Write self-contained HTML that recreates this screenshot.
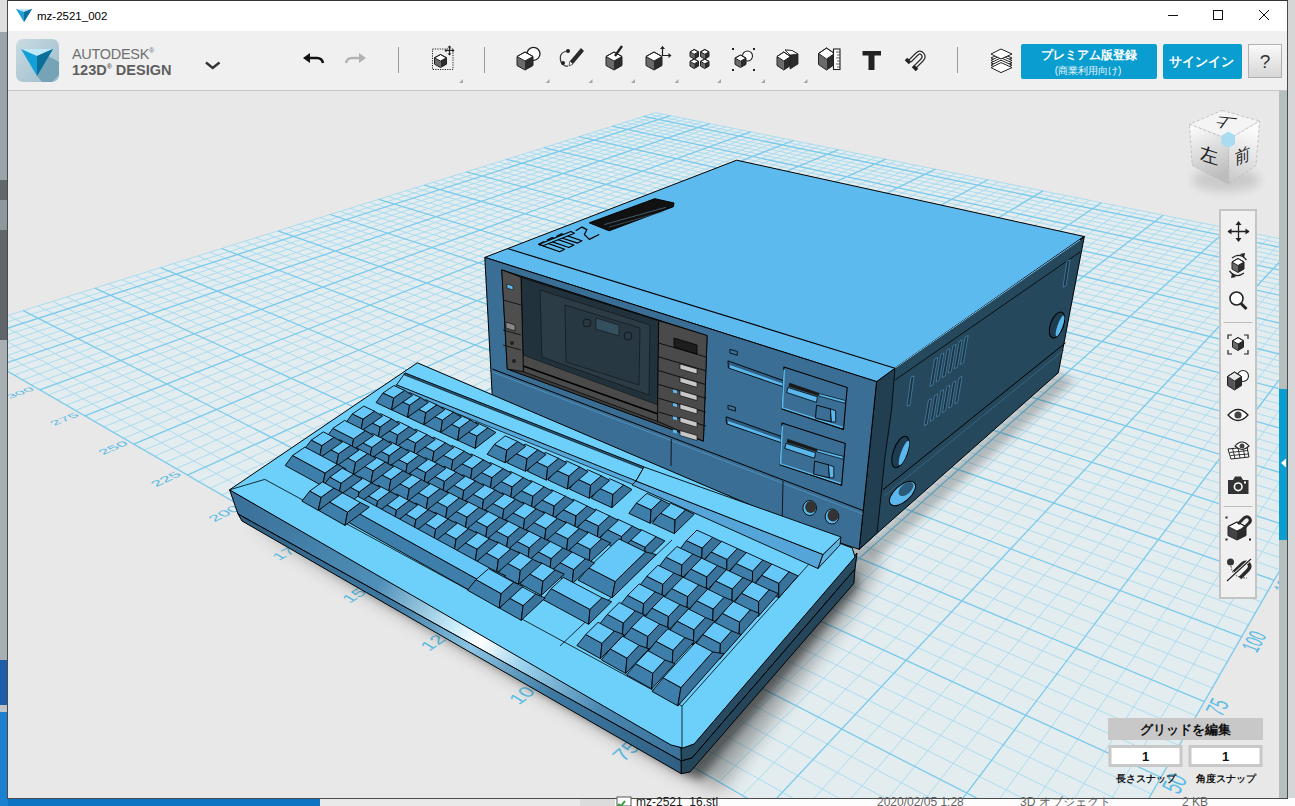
<!DOCTYPE html>
<html><head><meta charset="utf-8">
<style>
*{margin:0;padding:0;box-sizing:border-box}
html,body{width:1295px;height:806px;overflow:hidden;background:#0d74c4;font-family:"Liberation Sans",sans-serif}
.abs{position:absolute}
#lstrip{left:0;top:0;width:8px;height:806px;background:linear-gradient(#dedede 0 32px,#9ba4a9 32px 180px,#62676b 180px 200px,#8e979c 200px 230px,#5f6569 230px 340px,#a7afb3 340px 660px,#1c5fa8 660px 705px,#c0c4c8 705px 712px,#1a80cf 712px)}
#rstrip{left:1287px;top:0;width:8px;height:806px;background:#d4d6d8}
#bstrip{left:320px;top:798px;width:975px;height:8px;background:linear-gradient(90deg,#e9e9e9 0 260px,#dcdcdc 260px 295px,#fdfdfd 295px)}
#win{left:7px;top:0px;width:1281px;height:799px;background:#f0f0f0;border:1px solid #4a4a4a;border-top-color:#333;overflow:hidden}
#title{left:0;top:0;width:1279px;height:30px;background:#fff}
#toolbar{left:0;top:30px;width:1279px;height:60px;background:#f0f0f0;border-bottom:1px solid #c6c6c6}
#vp{left:0;top:90px;width:1271px;height:707px;background:#e8e8e8}
#sb{left:1271px;top:90px;width:8px;height:707px;background:#b5bfbe}
#sbblue{left:1271px;top:388px;width:8px;height:151px;background:#0a9dd0}
</style></head><body>
<div id="lstrip" class="abs"></div>
<div id="rstrip" class="abs"></div>
<div id="bstrip" class="abs"></div>
<div id="win" class="abs">
  <div id="title" class="abs"></div>
  <div id="toolbar" class="abs"></div>
  <div id="vp" class="abs"></div>
  <div id="sb" class="abs"></div>
  <div id="sbblue" class="abs"></div>
</div>
<svg class="abs" style="left:0;top:0" width="1295" height="806" viewBox="0 0 1295 806" font-family="'Liberation Sans', sans-serif">
<defs><clipPath id="vpclip"><rect x="8" y="91" width="1271" height="707"/></clipPath></defs>
<g clip-path="url(#vpclip)">
<polygon points="1048.9,972.4 1450.4,273.2 655.5,112.7 -55.0,335.1" fill="#e3ecef"/>
<path d="M1062.0 949.6L-38.8 330.0M1016.7 953.8L1434.3 270.0M1074.7 927.6L-22.9 325.1M985.5 935.8L1418.4 266.7M1086.9 906.3L-7.2 320.2M955.3 918.4L1402.6 263.6M1098.6 885.9L8.1 315.4M925.9 901.4L1387.1 260.4M1120.8 847.2L38.0 306.0M869.7 868.9L1356.6 254.3M1131.4 828.8L52.6 301.4M842.8 853.4L1341.7 251.3M1141.6 811.0L66.9 296.9M816.6 838.3L1326.9 248.3M1151.4 793.9L81.0 292.5M791.2 823.6L1312.3 245.3M1170.2 761.2L108.5 283.9M742.3 795.4L1283.7 239.5M1179.2 745.6L121.9 279.7M718.9 781.9L1269.7 236.7M1187.8 730.5L135.0 275.6M696.1 768.7L1255.8 233.9M1196.2 715.9L148.0 271.6M673.8 755.9L1242.1 231.1M1212.3 688.0L173.3 263.6M631.0 731.1L1215.1 225.7M1219.9 674.6L185.7 259.8M610.4 719.2L1201.9 223.0M1227.4 661.6L197.8 256.0M590.3 707.6L1188.8 220.4M1234.6 649.0L209.8 252.2M570.7 696.3L1175.9 217.8M1248.5 624.8L233.2 244.9M532.8 674.5L1150.5 212.6M1255.2 613.3L244.6 241.3M514.6 663.9L1138.0 210.1M1261.6 602.0L255.8 237.8M496.7 653.6L1125.7 207.6M1267.9 591.0L266.9 234.3M479.3 643.6L1113.4 205.2M1280.1 569.9L288.6 227.5M445.6 624.1L1089.5 200.3M1285.9 559.7L299.2 224.2M429.3 614.7L1077.7 197.9M1291.6 549.8L309.7 220.9M413.4 605.5L1066.0 195.6M1297.1 540.2L320.0 217.7M397.8 596.5L1054.5 193.2M1307.8 521.6L340.1 211.4M367.6 579.1L1031.8 188.7M1312.9 512.6L350.0 208.3M353.0 570.6L1020.6 186.4M1318.0 503.9L359.7 205.3M338.7 562.4L1009.5 184.2M1322.9 495.3L369.3 202.3M324.6 554.3L998.6 182.0M1332.4 478.8L388.1 196.4M297.4 538.6L977.1 177.6M1336.9 470.9L397.3 193.5M284.2 531.0L966.5 175.5M1341.4 463.1L406.4 190.7M271.3 523.5L956.1 173.4M1345.8 455.4L415.3 187.9M258.6 516.2L945.7 171.3M1354.3 440.7L432.9 182.4M234.0 501.9L925.3 167.2M1358.4 433.6L441.5 179.7M222.0 495.0L915.2 165.1M1362.4 426.6L450.0 177.0M210.3 488.2L905.3 163.1M1366.3 419.7L458.3 174.4M198.7 481.6L895.5 161.1M1373.9 406.5L474.8 169.2M176.3 468.6L876.1 157.2M1377.6 400.0L482.8 166.7M165.4 462.4L866.5 155.3M1381.2 393.7L490.8 164.2M154.7 456.2L857.1 153.4M1384.8 387.6L498.7 161.8M144.2 450.1L847.7 151.5M1391.6 375.6L514.1 156.9M123.7 438.3L829.3 147.8M1395.0 369.8L521.6 154.6M113.7 432.5L820.2 145.9M1398.3 364.1L529.1 152.2M103.9 426.8L811.2 144.1M1401.5 358.5L536.5 149.9M94.3 421.3L802.3 142.3M1407.7 347.6L551.0 145.4M75.5 410.4L784.7 138.8M1410.8 342.3L558.1 143.2M66.3 405.1L776.1 137.0M1413.7 337.1L565.2 141.0M57.3 399.9L767.5 135.3M1416.7 332.0L572.1 138.8M48.4 394.8L759.0 133.6M1422.4 322.1L585.8 134.5M31.1 384.8L742.3 130.2M1425.1 317.2L592.5 132.4M22.7 379.9L734.0 128.5M1427.9 312.5L599.1 130.3M14.3 375.1L725.8 126.9M1430.6 307.8L605.7 128.3M6.2 370.4L717.7 125.2M1435.8 298.7L618.5 124.2M-9.8 361.2L701.7 122.0M1438.3 294.3L624.9 122.3M-17.6 356.7L693.9 120.4M1440.8 289.9L631.1 120.3M-25.3 352.2L686.1 118.8M1443.3 285.7L637.3 118.4M-32.9 347.8L678.3 117.3M1448.1 277.3L649.5 114.5M-47.7 339.3L663.0 114.2M1450.4 273.2L655.5 112.7M-55.0 335.1L655.5 112.7" stroke="#a6daee" stroke-width="0.9" fill="none"/>
<path d="M1048.9 972.4L-55.0 335.1M1048.9 972.4L1450.4 273.2M1109.9 866.2L23.2 310.6M897.4 884.9L1371.8 257.3M1161.0 777.3L94.9 288.2M766.4 809.3L1297.9 242.4M1204.4 701.7L160.7 267.6M652.1 743.4L1228.5 228.4M1241.7 636.8L221.6 248.5M551.5 685.3L1163.1 215.2M1274.1 580.3L277.9 230.9M462.3 633.7L1101.4 202.7M1302.5 530.8L330.1 214.5M382.5 587.7L1043.0 190.9M1327.7 487.0L378.8 199.3M310.9 546.3L987.8 179.8M1350.1 448.0L424.2 185.1M246.2 509.0L935.4 169.2M1370.1 413.0L466.6 171.8M187.4 475.1L885.7 159.2M1388.2 381.5L506.4 159.3M133.8 444.1L838.5 149.6M1404.6 353.0L543.8 147.6M84.8 415.8L793.5 140.5M1419.5 327.0L579.0 136.6M39.7 389.8L750.6 131.9M1433.2 303.2L612.1 126.2M-1.9 365.8L709.7 123.6M1445.7 281.4L643.5 116.4M-40.4 343.5L670.6 115.7" stroke="#7acaeb" stroke-width="1.3" fill="none"/>
<g font-family="'Liberation Sans', sans-serif" fill="#5bbde6"><text transform="matrix(3.1580,-4.0798,5.5884,3.3034,869.43,894.95)" font-size="4.4" text-anchor="middle" dominant-baseline="central">25</text><text transform="matrix(2.1879,-3.9244,6.2154,3.1776,1124.12,873.46)" font-size="4.4" text-anchor="middle" dominant-baseline="central">25</text><text transform="matrix(3.3828,-3.5395,4.8488,2.8662,739.30,818.02)" font-size="4.4" text-anchor="middle" dominant-baseline="central">50</text><text transform="matrix(1.8441,-3.3077,5.8393,2.6786,1174.33,783.39)" font-size="4.4" text-anchor="middle" dominant-baseline="central">50</text><text transform="matrix(3.5258,-3.0997,4.2469,2.5104,625.85,750.96)" font-size="4.4" text-anchor="middle" dominant-baseline="central">75</text><text transform="matrix(1.5754,-2.8257,5.5015,2.2887,1216.95,706.95)" font-size="4.4" text-anchor="middle" dominant-baseline="central">75</text><text transform="matrix(3.6109,-2.7371,3.7505,2.2169,526.08,691.99)" font-size="4.4" text-anchor="middle" dominant-baseline="central">100</text><text transform="matrix(1.3614,-2.4419,5.1975,1.9781,1253.56,641.28)" font-size="4.4" text-anchor="middle" dominant-baseline="central">100</text><text transform="matrix(3.6543,-2.4345,3.3363,1.9721,437.64,639.71)" font-size="4.4" text-anchor="middle" dominant-baseline="central">125</text><text transform="matrix(1.1883,-2.1313,4.9234,1.7267,1285.36,584.25)" font-size="4.4" text-anchor="middle" dominant-baseline="central">125</text><text transform="matrix(3.6678,-2.1795,2.9871,1.7657,358.72,593.06)" font-size="4.4" text-anchor="middle" dominant-baseline="central">150</text><text transform="matrix(1.0461,-1.8764,4.6752,1.5204,1313.23,534.26)" font-size="4.4" text-anchor="middle" dominant-baseline="central">150</text><text transform="matrix(3.6596,-1.9624,2.6899,1.5900,287.86,551.17)" font-size="4.4" text-anchor="middle" dominant-baseline="central">175</text><text transform="matrix(0.9281,-1.6646,4.4498,1.3490,1337.86,490.07)" font-size="4.4" text-anchor="middle" dominant-baseline="central">175</text><text transform="matrix(3.6356,-1.7763,2.4351,1.4394,223.87,513.35)" font-size="4.4" text-anchor="middle" dominant-baseline="central">200</text><text transform="matrix(0.8289,-1.4868,4.2443,1.2050,1359.79,450.74)" font-size="4.4" text-anchor="middle" dominant-baseline="central">200</text><text transform="matrix(3.6003,-1.6154,2.2148,1.3092,165.82,479.03)" font-size="4.4" text-anchor="middle" dominant-baseline="central">225</text><text transform="matrix(0.7449,-1.3360,4.0564,1.0830,1379.44,415.51)" font-size="4.4" text-anchor="middle" dominant-baseline="central">225</text><text transform="matrix(3.5568,-1.4754,2.0230,1.1958,112.90,447.75)" font-size="4.4" text-anchor="middle" dominant-baseline="central">250</text><text transform="matrix(0.6730,-1.2070,3.8840,0.9786,1397.14,383.76)" font-size="4.4" text-anchor="middle" dominant-baseline="central">250</text><text transform="matrix(3.5076,-1.3528,1.8552,1.0966,64.47,419.13)" font-size="4.4" text-anchor="middle" dominant-baseline="central">275</text><text transform="matrix(0.6110,-1.0959,3.7253,0.8886,1413.17,355.01)" font-size="4.4" text-anchor="middle" dominant-baseline="central">275</text><text transform="matrix(3.4545,-1.2449,1.7074,1.0093,19.97,392.82)" font-size="4.4" text-anchor="middle" dominant-baseline="central">300</text><text transform="matrix(0.5572,-0.9994,3.5787,0.8105,1427.75,328.85)" font-size="4.4" text-anchor="middle" dominant-baseline="central">300</text><text transform="matrix(3.3988,-1.1494,1.5766,0.9319,-21.04,368.58)" font-size="4.4" text-anchor="middle" dominant-baseline="central">325</text><text transform="matrix(0.5102,-0.9151,3.4431,0.7422,1441.08,304.94)" font-size="4.4" text-anchor="middle" dominant-baseline="central">325</text><text transform="matrix(3.3416,-1.0645,1.4602,0.8632,-58.98,346.16)" font-size="4.4" text-anchor="middle" dominant-baseline="central">350</text><text transform="matrix(0.4689,-0.8411,3.3172,0.6823,1453.31,283.01)" font-size="4.4" text-anchor="middle" dominant-baseline="central">350</text></g>
<defs><filter id="blur12" x="-50%" y="-50%" width="200%" height="200%"><feGaussianBlur stdDeviation="9"/></filter><filter id="blur5" x="-50%" y="-50%" width="200%" height="200%"><feGaussianBlur stdDeviation="4"/></filter></defs>
<polygon points="242.0,521.0 681.0,774.0 720.0,790.0 860.0,600.0 880.0,560.0 850.0,540.0 650.0,700.0" fill="#000" opacity="0.30" filter="url(#blur12)"/>
<polygon points="242.0,519.0 681.0,772.0 700.0,780.0 858.0,588.0 856.0,570.0 681.0,755.0" fill="#000" opacity="0.45" filter="url(#blur5)"/>
<polygon points="860.0,549.0 1058.0,373.0 1075.0,380.0 875.0,560.0" fill="#000" opacity="0.22" filter="url(#blur5)"/>
<polygon points="876.6,381.6 895.0,368.2 1084.3,236.5 1058.3,372.8 877.1,533.2 859.2,549.3" fill="#26485d" stroke="#000" stroke-width="1.0" stroke-linejoin="round"/>
<polygon points="876.6,381.6 895.0,368.2 891.5,410.0 884.6,460.0 877.1,533.2 859.2,549.3" fill="#223f52" stroke="#000" stroke-width="0.8" stroke-linejoin="round"/>
<polygon points="484.8,257.4 736.7,160.2 1084.3,236.5 895.0,368.2 876.6,381.6" fill="#5dbaee" stroke="#000" stroke-width="1.0" stroke-linejoin="round"/>
<polyline points="508.2,248.7 895.0,368.2 1084.3,236.5" fill="none" stroke="#000" stroke-width="1.2" stroke-linejoin="round"/>
<polyline points="895.0,368.2 1080.0,240.0" fill="none" stroke="#7cc8f0" stroke-width="1" stroke-linejoin="round"/>
<polygon points="484.8,257.4 876.6,381.6 859.2,549.3 494.0,429.0" fill="#3a6e94" stroke="#000" stroke-width="1.0" stroke-linejoin="round"/>
<polyline points="882.8,489.8 1065.5,342.8" fill="none" stroke="#000" stroke-width="1" stroke-linejoin="round"/>
<polyline points="884.0,496.0 1064.0,350.0" fill="none" stroke="#3d6a85" stroke-width="0.8" stroke-linejoin="round"/>
<polyline points="895.0,380.0 1080.0,252.0" fill="none" stroke="#000" stroke-width="0.8" stroke-linejoin="round"/>
<polygon points="930.0,386.3 934.7,359.0 937.7,357.5 933.0,384.8" fill="#1a3242" stroke="#4f8db3" stroke-width="0.7" stroke-linejoin="round"/>
<polygon points="936.1,381.9 940.8,354.6 943.8,353.1 939.1,380.4" fill="#1a3242" stroke="#4f8db3" stroke-width="0.7" stroke-linejoin="round"/>
<polygon points="942.2,377.5 946.9,350.2 949.9,348.7 945.2,376.0" fill="#1a3242" stroke="#4f8db3" stroke-width="0.7" stroke-linejoin="round"/>
<polygon points="948.3,373.1 953.0,345.8 956.0,344.3 951.3,371.6" fill="#1a3242" stroke="#4f8db3" stroke-width="0.7" stroke-linejoin="round"/>
<polygon points="954.4,368.7 959.1,341.4 962.1,339.9 957.4,367.2" fill="#1a3242" stroke="#4f8db3" stroke-width="0.7" stroke-linejoin="round"/>
<polygon points="960.5,364.3 965.2,337.0 968.2,335.5 963.5,362.8" fill="#1a3242" stroke="#4f8db3" stroke-width="0.7" stroke-linejoin="round"/>
<polygon points="924.2,425.6 928.5,400.0 931.5,398.5 927.2,424.1" fill="#1a3242" stroke="#4f8db3" stroke-width="0.7" stroke-linejoin="round"/>
<polygon points="930.3,421.2 934.6,395.6 937.6,394.1 933.3,419.7" fill="#1a3242" stroke="#4f8db3" stroke-width="0.7" stroke-linejoin="round"/>
<polygon points="936.4,416.8 940.7,391.2 943.7,389.7 939.4,415.3" fill="#1a3242" stroke="#4f8db3" stroke-width="0.7" stroke-linejoin="round"/>
<polygon points="942.5,412.4 946.8,386.8 949.8,385.3 945.5,410.9" fill="#1a3242" stroke="#4f8db3" stroke-width="0.7" stroke-linejoin="round"/>
<polygon points="948.6,408.0 952.9,382.4 955.9,380.9 951.6,406.5" fill="#1a3242" stroke="#4f8db3" stroke-width="0.7" stroke-linejoin="round"/>
<polygon points="954.7,403.6 959.0,378.0 962.0,376.5 957.7,402.1" fill="#1a3242" stroke="#4f8db3" stroke-width="0.7" stroke-linejoin="round"/>
<polygon points="907.0,406.0 911.0,377.0 914.0,376.0 910.0,405.0" fill="#1a3242" stroke="#4f8db3" stroke-width="0.7" stroke-linejoin="round"/>
<polygon points="1063.0,287.0 1067.0,261.0 1070.0,260.0 1066.0,286.0" fill="#1a3242" stroke="#4f8db3" stroke-width="0.7" stroke-linejoin="round"/>
<ellipse cx="900.5" cy="452" rx="7" ry="16.5" transform="rotate(20 900.5 452)" fill="#1f3d50" stroke="#000" stroke-width="1"/>
<ellipse cx="904" cy="453" rx="3" ry="13" transform="rotate(20 904 453)" fill="#5ab8ec"/>
<ellipse cx="1057" cy="325" rx="6.5" ry="13.5" transform="rotate(20 1057 325)" fill="#1f3d50" stroke="#000" stroke-width="1"/>
<ellipse cx="1060" cy="326" rx="2.5" ry="11" transform="rotate(20 1060 326)" fill="#5ab8ec"/>
<ellipse cx="902.5" cy="493.5" rx="8" ry="16" transform="rotate(48 902.5 493.5)" fill="#5ab8ec" stroke="#000" stroke-width="1"/>
<ellipse cx="906" cy="489" rx="5" ry="9" transform="rotate(48 906 489)" fill="#2a5a78"/>
<polygon points="501.8,269.9 707.1,335.6 703.4,441.1 507.3,369.1" fill="#3c3c3c" stroke="#000" stroke-width="1.0" stroke-linejoin="round"/>
<polygon points="521.0,277.3 658.7,320.7 657.5,421.3 523.4,371.6" fill="#22323c" stroke="#000" stroke-width="0.8" stroke-linejoin="round"/>
<polygon points="540.0,290.0 650.0,325.0 649.0,395.0 542.0,357.0" fill="#2b3c46" stroke="#111" stroke-width="0.6" stroke-linejoin="round"/>
<polygon points="565.0,305.0 640.0,328.0 639.0,385.0 566.0,362.0" fill="#273843" stroke="#111" stroke-width="0.6" stroke-linejoin="round"/>
<circle cx="587" cy="323" r="4" fill="none" stroke="#111" stroke-width="0.8"/><circle cx="628" cy="336" r="4" fill="none" stroke="#111" stroke-width="0.8"/>
<polygon points="596.0,318.0 619.0,325.0 619.0,336.0 596.0,329.0" fill="#34505e" stroke="#111" stroke-width="0.6" stroke-linejoin="round"/>
<polygon points="523.0,355.0 657.8,405.0 657.5,421.3 523.4,371.6" fill="#4a4a4a" stroke="#111" stroke-width="0.6" stroke-linejoin="round"/>
<polyline points="512.0,362.0 703.0,430.0" fill="none" stroke="#000" stroke-width="1.6" stroke-linejoin="round"/>
<polygon points="501.8,269.9 521.0,277.3 523.4,371.6 507.3,369.1" fill="#4e4e4e" stroke="#000" stroke-width="0.8" stroke-linejoin="round"/>
<polyline points="503.0,300.0 521.0,305.0" fill="none" stroke="#000" stroke-width="0.7" stroke-linejoin="round"/>
<polyline points="503.0,330.0 521.0,335.0" fill="none" stroke="#000" stroke-width="0.7" stroke-linejoin="round"/>
<polyline points="503.0,345.0 521.0,350.0" fill="none" stroke="#000" stroke-width="0.7" stroke-linejoin="round"/>
<polygon points="507.0,284.0 513.0,286.0 513.0,290.0 507.0,288.0" fill="#5ab8ec" stroke="#000" stroke-width="0.5" stroke-linejoin="round"/>
<circle cx="512" cy="343" r="2" fill="#222"/><circle cx="514" cy="361" r="2" fill="#222"/>
<polygon points="506.0,322.0 515.0,325.0 515.0,331.0 506.0,328.0" fill="#888" stroke="#000" stroke-width="0.6" stroke-linejoin="round"/>
<polygon points="658.7,320.7 707.1,335.6 703.4,441.1 657.5,421.3" fill="#4a4a4a" stroke="#000" stroke-width="0.8" stroke-linejoin="round"/>
<polyline points="658.5,343.0 706.0,357.0" fill="none" stroke="#000" stroke-width="0.8" stroke-linejoin="round"/>
<polyline points="658.5,356.8 706.0,370.8" fill="none" stroke="#000" stroke-width="0.8" stroke-linejoin="round"/>
<polyline points="658.5,370.6 706.0,384.6" fill="none" stroke="#000" stroke-width="0.8" stroke-linejoin="round"/>
<polyline points="658.5,384.4 706.0,398.4" fill="none" stroke="#000" stroke-width="0.8" stroke-linejoin="round"/>
<polyline points="658.5,398.2 706.0,412.2" fill="none" stroke="#000" stroke-width="0.8" stroke-linejoin="round"/>
<polyline points="658.5,412.0 706.0,426.0" fill="none" stroke="#000" stroke-width="0.8" stroke-linejoin="round"/>
<polygon points="674.0,338.0 697.0,345.0 697.0,354.0 674.0,347.0" fill="#1e1e1e" stroke="#000" stroke-width="0.8" stroke-linejoin="round"/>
<polygon points="680.0,364.0 697.0,369.0 697.0,374.0 680.0,369.0" fill="#c8c8c8" stroke="#000" stroke-width="0.6" stroke-linejoin="round"/>
<polygon points="680.0,377.3 697.0,382.3 697.0,387.3 680.0,382.3" fill="#c8c8c8" stroke="#000" stroke-width="0.6" stroke-linejoin="round"/>
<polygon points="680.0,390.6 697.0,395.6 697.0,400.6 680.0,395.6" fill="#c8c8c8" stroke="#000" stroke-width="0.6" stroke-linejoin="round"/>
<polygon points="680.0,403.9 697.0,408.9 697.0,413.9 680.0,408.9" fill="#c8c8c8" stroke="#000" stroke-width="0.6" stroke-linejoin="round"/>
<polygon points="680.0,417.2 697.0,422.2 697.0,427.2 680.0,422.2" fill="#c8c8c8" stroke="#000" stroke-width="0.6" stroke-linejoin="round"/>
<polygon points="680.0,430.5 697.0,435.5 697.0,440.5 680.0,435.5" fill="#c8c8c8" stroke="#000" stroke-width="0.6" stroke-linejoin="round"/>
<polygon points="673.0,389.6 677.0,390.6 677.0,393.6 673.0,392.6" fill="#5ab8ec"/>
<polygon points="673.0,402.9 677.0,403.9 677.0,406.9 673.0,405.9" fill="#5ab8ec"/>
<polygon points="673.0,416.2 677.0,417.2 677.0,420.2 673.0,419.2" fill="#5ab8ec"/>
<polygon points="673.0,429.5 677.0,430.5 677.0,433.5 673.0,432.5" fill="#5ab8ec"/>
<polyline points="492.4,369.0 863.4,510.6" fill="none" stroke="#000" stroke-width="1" stroke-linejoin="round"/>
<polyline points="492.4,372.0 863.0,514.0" fill="none" stroke="#5a9cc8" stroke-width="0.7" stroke-linejoin="round"/>
<polyline points="671.3,439.0 671.0,466.0" fill="none" stroke="#000" stroke-width="0.8" stroke-linejoin="round"/>
<polyline points="783.0,481.0 782.0,530.0" fill="none" stroke="#000" stroke-width="0.8" stroke-linejoin="round"/>
<polygon points="729.9,349.3 737.3,351.5 737.3,355.3 729.9,353.0" fill="#3a6e94" stroke="#000" stroke-width="0.8" stroke-linejoin="round"/>
<polygon points="728.0,360.9 789.5,382.8 789.1,388.8 728.4,367.9" fill="#2f5f86" stroke="#000" stroke-width="0.9" stroke-linejoin="round"/>
<polygon points="729.9,365.1 788.5,385.6 788.5,388.0 729.9,367.9" fill="#5ab8ec"/>
<polygon points="783.9,367.0 847.2,387.5 843.5,429.4 782.0,408.9" fill="#3a6e94" stroke="#000" stroke-width="1.1" stroke-linejoin="round"/>
<polyline points="784.3,369.8 782.4,408.0 842.5,427.5" fill="none" stroke="#5ab8ec" stroke-width="1.6" stroke-linejoin="round"/>
<polyline points="782.0,408.9 843.5,429.4" fill="none" stroke="#000" stroke-width="0.8" stroke-linejoin="round"/>
<polygon points="789.5,382.8 819.3,393.1 818.3,395.9 788.5,386.6" fill="#1a1a1a"/>
<polygon points="788.0,387.5 817.4,396.8 816.5,402.4 786.7,392.5" fill="#5ab8ec" stroke="#000" stroke-width="0.8" stroke-linejoin="round"/>
<polygon points="819.3,393.6 845.3,400.5 845.0,403.3 818.5,395.9" fill="#5ab8ec" stroke="#000" stroke-width="0.7" stroke-linejoin="round"/>
<polygon points="816.5,405.2 830.4,408.9 831.4,421.9 815.5,418.2" fill="#3a6e94" stroke="#000" stroke-width="0.9" stroke-linejoin="round"/>
<polygon points="830.4,408.9 835.7,410.8 835.7,421.9 831.4,421.9" fill="#5ab8ec" stroke="#000" stroke-width="0.8" stroke-linejoin="round"/>
<polygon points="728.0,405.2 735.4,407.4 735.4,411.2 728.0,408.9" fill="#3a6e94" stroke="#000" stroke-width="0.8" stroke-linejoin="round"/>
<polygon points="726.1,416.8 787.6,438.7 787.2,444.7 726.5,423.8" fill="#2f5f86" stroke="#000" stroke-width="0.9" stroke-linejoin="round"/>
<polygon points="728.0,421.0 786.6,441.5 786.6,443.9 728.0,423.8" fill="#5ab8ec"/>
<polygon points="782.0,422.9 845.3,443.4 841.6,485.3 780.1,464.8" fill="#3a6e94" stroke="#000" stroke-width="1.1" stroke-linejoin="round"/>
<polyline points="782.4,425.7 780.5,463.9 840.6,483.4" fill="none" stroke="#5ab8ec" stroke-width="1.6" stroke-linejoin="round"/>
<polyline points="780.1,464.8 841.6,485.3" fill="none" stroke="#000" stroke-width="0.8" stroke-linejoin="round"/>
<polygon points="787.6,438.7 817.4,449.0 816.4,451.8 786.6,442.4" fill="#1a1a1a"/>
<polygon points="786.1,443.4 815.5,452.7 814.6,458.3 784.8,448.4" fill="#5ab8ec" stroke="#000" stroke-width="0.8" stroke-linejoin="round"/>
<polygon points="817.4,449.5 843.4,456.4 843.1,459.2 816.6,451.8" fill="#5ab8ec" stroke="#000" stroke-width="0.7" stroke-linejoin="round"/>
<polygon points="814.6,461.1 828.5,464.8 829.5,477.8 813.6,474.1" fill="#3a6e94" stroke="#000" stroke-width="0.9" stroke-linejoin="round"/>
<polygon points="828.5,464.8 833.8,466.7 833.8,477.8 829.5,477.8" fill="#5ab8ec" stroke="#000" stroke-width="0.8" stroke-linejoin="round"/>
<ellipse cx="809.7" cy="508" rx="6.8" ry="7.5" fill="#5ab8ec" stroke="#000" stroke-width="0.9"/>
<ellipse cx="810.7" cy="507" rx="5.5" ry="6" fill="#333"/>
<ellipse cx="832" cy="516.5" rx="6.8" ry="7.5" fill="#5ab8ec" stroke="#000" stroke-width="0.9"/>
<ellipse cx="833" cy="515.5" rx="5.5" ry="6" fill="#333"/>
<polygon points="538.7,244.4 559.7,251.8 564.6,249.3 543.6,241.9" fill="#5dbaee" stroke="#000" stroke-width="1.2" stroke-linejoin="round"/>
<polygon points="547.3,240.1 568.9,247.5 573.9,245.0 552.2,237.6" fill="#5dbaee" stroke="#000" stroke-width="1.2" stroke-linejoin="round"/>
<polygon points="556.6,236.3 577.6,243.1 581.9,240.7 561.5,233.9" fill="#5dbaee" stroke="#000" stroke-width="1.2" stroke-linejoin="round"/>
<polygon points="538.7,244.4 570.8,231.4 574.5,233.3 543.6,245.6" fill="#5dbaee" stroke="#000" stroke-width="1.1" stroke-linejoin="round"/>
<polyline points="575.7,230.8 581.9,227.1 586.9,229.6 584.4,234.5 589.3,239.4 599.2,234.5" fill="none" stroke="#000" stroke-width="1.2" stroke-linejoin="round"/>
<polygon points="589.3,222.8 654.8,198.7 674.0,203.0 673.4,206.7 609.1,230.8" fill="#111" stroke="#000" stroke-width="1" stroke-linejoin="round"/>
<polyline points="604.2,224.6 666.0,207.3" fill="none" stroke="#4a6e85" stroke-width="0.8" stroke-linejoin="round"/>
<polyline points="609.1,227.1 663.5,211.6" fill="none" stroke="#4a6e85" stroke-width="0.6" stroke-linejoin="round"/>
<defs><linearGradient id="refl" gradientUnits="userSpaceOnUse" x1="240" y1="518" x2="681" y2="773"><stop offset="0" stop-color="#3b729b"/><stop offset="0.3" stop-color="#4f8fb8"/><stop offset="0.47" stop-color="#c8ecfa"/><stop offset="0.53" stop-color="#ffffff"/><stop offset="0.62" stop-color="#9ed4ee"/><stop offset="0.8" stop-color="#4a88b2"/><stop offset="1" stop-color="#3a6f96"/></linearGradient><linearGradient id="refl2" gradientUnits="userSpaceOnUse" x1="240" y1="518" x2="681" y2="773"><stop offset="0" stop-color="#2f5f82"/><stop offset="0.35" stop-color="#3f7aa3"/><stop offset="0.52" stop-color="#8cc6e4"/><stop offset="0.7" stop-color="#3f7aa3"/><stop offset="1" stop-color="#2f5f82"/></linearGradient></defs>
<polygon points="229.6,489.8 681.0,748.0 683.0,752.0 681.3,761.0 238.0,514.0" fill="url(#refl)" stroke="#000" stroke-width="1.0" stroke-linejoin="round"/>
<polygon points="238.0,514.0 681.3,761.0 681.3,773.7 242.0,521.0" fill="url(#refl2)" stroke="#000" stroke-width="1.0" stroke-linejoin="round"/>
<polygon points="681.0,748.0 694.0,744.0 857.0,553.0 855.0,569.0 692.0,758.0 681.3,761.0" fill="#284b62" stroke="#000" stroke-width="1.0" stroke-linejoin="round"/>
<polygon points="681.3,761.0 692.0,758.0 855.0,569.0 853.8,583.4 690.0,772.0 681.3,773.7" fill="#25455a" stroke="#000" stroke-width="1.0" stroke-linejoin="round"/>
<polygon points="229.6,489.8 417.3,362.8 843.4,544.7 852.3,548.0 855.0,557.0 694.2,743.9 683.0,748.0 671.0,745.0" fill="#6cd0fb" stroke="#000" stroke-width="1.0" stroke-linejoin="round"/>
<polyline points="229.6,489.8 264.8,479.4" fill="none" stroke="#000" stroke-width="0.8" stroke-linejoin="round"/>
<polyline points="264.8,479.4 682.0,706.0 682.0,748.0" fill="none" stroke="#000" stroke-width="0.8" stroke-linejoin="round"/>
<polyline points="682.0,706.0 826.0,545.0" fill="none" stroke="#000" stroke-width="0.8" stroke-linejoin="round"/>
<polyline points="560.0,646.0 672.0,540.0" fill="none" stroke="#000" stroke-width="0.8" stroke-linejoin="round"/>
<polygon points="396.5,384.9 405.0,373.0 644.0,467.0 636.0,481.0" fill="#6cd0fb" stroke="#000" stroke-width="0.9" stroke-linejoin="round"/>
<polygon points="405.0,373.0 644.0,467.0 643.5,469.0 404.5,375.0" fill="#2a5574" stroke="#000" stroke-width="0.6" stroke-linejoin="round"/>
<polygon points="396.5,384.9 636.0,481.0 634.0,485.0 395.0,388.5" fill="#55a8dc" stroke="#000" stroke-width="0.7" stroke-linejoin="round"/>
<polygon points="636.0,481.0 823.0,554.5 818.0,568.5 632.0,485.0" fill="#55a5d8" stroke="#000" stroke-width="0.9" stroke-linejoin="round"/>
<polygon points="823.0,554.5 841.0,537.0 840.0,545.0 818.0,568.5" fill="#5fb3e3" stroke="#000" stroke-width="0.9" stroke-linejoin="round"/>
<polygon points="644.0,467.0 841.0,537.0 823.0,554.5 636.0,481.0" fill="#6cd0fb" stroke="#000" stroke-width="0.9" stroke-linejoin="round"/>
<polygon points="652.3,523.4 674.4,533.6 675.1,519.9 660.1,513.0" fill="#3e7eaa" stroke="#000" stroke-width="0.9" stroke-linejoin="round"/><polygon points="674.4,533.6 694.2,514.3 685.5,509.9 675.1,519.9" fill="#39739c" stroke="#000" stroke-width="0.9" stroke-linejoin="round"/><polygon points="660.1,513.0 675.1,519.9 685.5,509.9 670.5,503.1" fill="#66c8f8" stroke="#000" stroke-width="0.9" stroke-linejoin="round"/>
<polygon points="628.8,513.4 650.2,523.3 651.1,509.8 636.4,503.1" fill="#3e7eaa" stroke="#000" stroke-width="0.9" stroke-linejoin="round"/><polygon points="650.2,523.3 670.1,504.4 661.5,500.0 651.1,509.8" fill="#39739c" stroke="#000" stroke-width="0.9" stroke-linejoin="round"/><polygon points="636.4,503.1 651.1,509.8 661.5,500.0 646.9,493.4" fill="#66c8f8" stroke="#000" stroke-width="0.9" stroke-linejoin="round"/>
<polygon points="591.3,498.2 611.9,507.7 612.9,494.4 598.9,488.0" fill="#3e7eaa" stroke="#000" stroke-width="0.9" stroke-linejoin="round"/><polygon points="611.9,507.7 632.0,489.5 623.5,484.9 612.9,494.4" fill="#39739c" stroke="#000" stroke-width="0.9" stroke-linejoin="round"/><polygon points="598.9,488.0 612.9,494.4 623.5,484.9 609.5,478.6" fill="#66c8f8" stroke="#000" stroke-width="0.9" stroke-linejoin="round"/>
<polygon points="569.4,489.0 589.4,498.3 590.6,485.1 577.0,478.8" fill="#3e7eaa" stroke="#000" stroke-width="0.9" stroke-linejoin="round"/><polygon points="589.4,498.3 609.7,480.4 601.3,475.8 590.6,485.1" fill="#39739c" stroke="#000" stroke-width="0.9" stroke-linejoin="round"/><polygon points="577.0,478.8 590.6,485.1 601.3,475.8 587.6,469.7" fill="#66c8f8" stroke="#000" stroke-width="0.9" stroke-linejoin="round"/>
<polygon points="548.1,480.0 567.6,489.1 568.9,476.1 555.6,469.9" fill="#3e7eaa" stroke="#000" stroke-width="0.9" stroke-linejoin="round"/><polygon points="567.6,489.1 588.0,471.6 579.6,466.9 568.9,476.1" fill="#39739c" stroke="#000" stroke-width="0.9" stroke-linejoin="round"/><polygon points="555.6,469.9 568.9,476.1 579.6,466.9 566.3,460.9" fill="#66c8f8" stroke="#000" stroke-width="0.9" stroke-linejoin="round"/>
<polygon points="527.3,471.2 546.3,480.1 547.7,467.2 534.7,461.2" fill="#3e7eaa" stroke="#000" stroke-width="0.9" stroke-linejoin="round"/><polygon points="546.3,480.1 566.8,462.9 558.4,458.3 547.7,467.2" fill="#39739c" stroke="#000" stroke-width="0.9" stroke-linejoin="round"/><polygon points="534.7,461.2 547.7,467.2 558.4,458.3 545.4,452.4" fill="#66c8f8" stroke="#000" stroke-width="0.9" stroke-linejoin="round"/>
<polygon points="506.9,462.7 525.5,471.3 527.0,458.6 514.3,452.7" fill="#3e7eaa" stroke="#000" stroke-width="0.9" stroke-linejoin="round"/><polygon points="525.5,471.3 546.1,454.5 537.8,449.8 527.0,458.6" fill="#39739c" stroke="#000" stroke-width="0.9" stroke-linejoin="round"/><polygon points="514.3,452.7 527.0,458.6 537.8,449.8 525.1,444.1" fill="#66c8f8" stroke="#000" stroke-width="0.9" stroke-linejoin="round"/>
<polygon points="457.8,440.3 475.2,448.4 476.9,436.0 465.0,430.5" fill="#3e7eaa" stroke="#000" stroke-width="0.9" stroke-linejoin="round"/><polygon points="475.2,448.4 495.9,432.5 487.8,427.7 476.9,436.0" fill="#39739c" stroke="#000" stroke-width="0.9" stroke-linejoin="round"/><polygon points="465.0,430.5 476.9,436.0 487.8,427.7 475.9,422.3" fill="#66c8f8" stroke="#000" stroke-width="0.9" stroke-linejoin="round"/>
<polygon points="440.7,432.4 457.7,440.4 459.5,428.0 447.9,422.6" fill="#3e7eaa" stroke="#000" stroke-width="0.9" stroke-linejoin="round"/><polygon points="457.7,440.4 478.5,424.8 470.4,419.9 459.5,428.0" fill="#39739c" stroke="#000" stroke-width="0.9" stroke-linejoin="round"/><polygon points="447.9,422.6 459.5,428.0 470.4,419.9 458.8,414.6" fill="#66c8f8" stroke="#000" stroke-width="0.9" stroke-linejoin="round"/>
<polygon points="424.0,424.7 440.7,432.5 442.5,420.2 431.1,415.0" fill="#3e7eaa" stroke="#000" stroke-width="0.9" stroke-linejoin="round"/><polygon points="440.7,432.5 461.4,417.2 453.4,412.2 442.5,420.2" fill="#39739c" stroke="#000" stroke-width="0.9" stroke-linejoin="round"/><polygon points="431.1,415.0 442.5,420.2 453.4,412.2 442.0,407.1" fill="#66c8f8" stroke="#000" stroke-width="0.9" stroke-linejoin="round"/>
<polygon points="407.7,417.2 423.9,424.8 425.9,412.6 414.7,407.5" fill="#3e7eaa" stroke="#000" stroke-width="0.9" stroke-linejoin="round"/><polygon points="423.9,424.8 444.8,409.7 436.8,404.8 425.9,412.6" fill="#39739c" stroke="#000" stroke-width="0.9" stroke-linejoin="round"/><polygon points="414.7,407.5 425.9,412.6 436.8,404.8 425.6,399.7" fill="#66c8f8" stroke="#000" stroke-width="0.9" stroke-linejoin="round"/>
<polygon points="487.1,454.3 505.2,462.8 506.8,450.1 494.4,444.4" fill="#3e7eaa" stroke="#000" stroke-width="0.9" stroke-linejoin="round"/><polygon points="505.2,462.8 525.8,446.3 517.6,441.5 506.8,450.1" fill="#39739c" stroke="#000" stroke-width="0.9" stroke-linejoin="round"/><polygon points="494.4,444.4 506.8,450.1 517.6,441.5 505.2,435.9" fill="#66c8f8" stroke="#000" stroke-width="0.9" stroke-linejoin="round"/>
<polygon points="391.7,409.8 407.6,417.3 409.6,405.2 398.7,400.2" fill="#3e7eaa" stroke="#000" stroke-width="0.9" stroke-linejoin="round"/><polygon points="407.6,417.3 428.4,402.5 420.5,397.5 409.6,405.2" fill="#39739c" stroke="#000" stroke-width="0.9" stroke-linejoin="round"/><polygon points="398.7,400.2 409.6,405.2 420.5,397.5 409.6,392.6" fill="#66c8f8" stroke="#000" stroke-width="0.9" stroke-linejoin="round"/>
<polygon points="376.1,402.6 391.6,409.9 393.7,397.9 383.0,393.0" fill="#3e7eaa" stroke="#000" stroke-width="0.9" stroke-linejoin="round"/><polygon points="391.6,409.9 412.5,395.4 404.6,390.4 393.7,397.9" fill="#39739c" stroke="#000" stroke-width="0.9" stroke-linejoin="round"/><polygon points="383.0,393.0 393.7,397.9 404.6,390.4 393.9,385.5" fill="#66c8f8" stroke="#000" stroke-width="0.9" stroke-linejoin="round"/>
<polygon points="753.6,586.0 778.8,597.8 778.9,583.3 761.7,575.3" fill="#3e7eaa" stroke="#000" stroke-width="0.9" stroke-linejoin="round"/><polygon points="778.8,597.8 798.1,575.9 789.0,571.8 778.9,583.3" fill="#39739c" stroke="#000" stroke-width="0.9" stroke-linejoin="round"/><polygon points="761.7,575.3 778.9,583.3 789.0,571.8 771.9,564.0" fill="#66c8f8" stroke="#000" stroke-width="0.9" stroke-linejoin="round"/>
<polygon points="727.9,574.0 752.3,585.5 752.6,571.2 735.9,563.4" fill="#3e7eaa" stroke="#000" stroke-width="0.9" stroke-linejoin="round"/><polygon points="752.3,585.5 771.8,564.1 762.8,560.0 752.6,571.2" fill="#39739c" stroke="#000" stroke-width="0.9" stroke-linejoin="round"/><polygon points="735.9,563.4 752.6,571.2 762.8,560.0 746.2,552.4" fill="#66c8f8" stroke="#000" stroke-width="0.9" stroke-linejoin="round"/>
<polygon points="702.8,562.4 726.6,573.6 727.0,559.4 710.8,551.8" fill="#3e7eaa" stroke="#000" stroke-width="0.9" stroke-linejoin="round"/><polygon points="726.6,573.6 746.3,552.7 737.4,548.5 727.0,559.4" fill="#39739c" stroke="#000" stroke-width="0.9" stroke-linejoin="round"/><polygon points="710.8,551.8 727.0,559.4 737.4,548.5 721.2,541.1" fill="#66c8f8" stroke="#000" stroke-width="0.9" stroke-linejoin="round"/>
<polygon points="678.5,551.1 701.6,562.0 702.2,548.0 686.4,540.6" fill="#3e7eaa" stroke="#000" stroke-width="0.9" stroke-linejoin="round"/><polygon points="701.6,562.0 721.4,541.6 712.6,537.3 702.2,548.0" fill="#39739c" stroke="#000" stroke-width="0.9" stroke-linejoin="round"/><polygon points="686.4,540.6 702.2,548.0 712.6,537.3 696.9,530.1" fill="#66c8f8" stroke="#000" stroke-width="0.9" stroke-linejoin="round"/>
<polygon points="733.1,604.0 758.4,616.3 758.7,601.5 741.4,593.2" fill="#3e7eaa" stroke="#000" stroke-width="0.9" stroke-linejoin="round"/><polygon points="758.4,616.3 778.4,593.6 769.1,589.7 758.7,601.5" fill="#39739c" stroke="#000" stroke-width="0.9" stroke-linejoin="round"/><polygon points="741.4,593.2 758.7,601.5 769.1,589.7 752.0,581.6" fill="#66c8f8" stroke="#000" stroke-width="0.9" stroke-linejoin="round"/>
<polygon points="707.4,591.6 731.9,603.5 732.3,589.0 715.6,580.9" fill="#3e7eaa" stroke="#000" stroke-width="0.9" stroke-linejoin="round"/><polygon points="731.9,603.5 752.1,581.5 742.9,577.5 732.3,589.0" fill="#39739c" stroke="#000" stroke-width="0.9" stroke-linejoin="round"/><polygon points="715.6,580.9 732.3,589.0 742.9,577.5 726.2,569.6" fill="#66c8f8" stroke="#000" stroke-width="0.9" stroke-linejoin="round"/>
<polygon points="682.3,579.6 706.2,591.2 706.8,576.8 690.5,568.9" fill="#3e7eaa" stroke="#000" stroke-width="0.9" stroke-linejoin="round"/><polygon points="706.2,591.2 726.5,569.6 717.4,565.6 706.8,576.8" fill="#39739c" stroke="#000" stroke-width="0.9" stroke-linejoin="round"/><polygon points="690.5,568.9 706.8,576.8 717.4,565.6 701.2,557.9" fill="#66c8f8" stroke="#000" stroke-width="0.9" stroke-linejoin="round"/>
<polygon points="622.0,550.3 644.2,561.1 645.1,547.2 630.0,539.9" fill="#3e7eaa" stroke="#000" stroke-width="0.9" stroke-linejoin="round"/><polygon points="644.2,561.1 664.9,540.9 656.0,536.6 645.1,547.2" fill="#39739c" stroke="#000" stroke-width="0.9" stroke-linejoin="round"/><polygon points="630.0,539.9 645.1,547.2 656.0,536.6 640.9,529.5" fill="#66c8f8" stroke="#000" stroke-width="0.9" stroke-linejoin="round"/>
<polygon points="658.0,567.9 681.2,579.1 681.9,564.9 666.1,557.3" fill="#3e7eaa" stroke="#000" stroke-width="0.9" stroke-linejoin="round"/><polygon points="681.2,579.1 701.7,558.1 692.7,554.0 681.9,564.9" fill="#39739c" stroke="#000" stroke-width="0.9" stroke-linejoin="round"/><polygon points="666.1,557.3 681.9,564.9 692.7,554.0 676.9,546.5" fill="#66c8f8" stroke="#000" stroke-width="0.9" stroke-linejoin="round"/>
<polygon points="598.8,539.7 620.4,550.2 621.5,536.5 606.7,529.3" fill="#3e7eaa" stroke="#000" stroke-width="0.9" stroke-linejoin="round"/><polygon points="620.4,550.2 641.3,530.5 632.4,526.1 621.5,536.5" fill="#39739c" stroke="#000" stroke-width="0.9" stroke-linejoin="round"/><polygon points="606.7,529.3 621.5,536.5 632.4,526.1 617.7,519.2" fill="#66c8f8" stroke="#000" stroke-width="0.9" stroke-linejoin="round"/>
<polygon points="576.2,529.4 597.2,539.6 598.5,526.0 584.1,519.1" fill="#3e7eaa" stroke="#000" stroke-width="0.9" stroke-linejoin="round"/><polygon points="597.2,539.6 618.3,520.3 609.5,515.9 598.5,526.0" fill="#39739c" stroke="#000" stroke-width="0.9" stroke-linejoin="round"/><polygon points="584.1,519.1 598.5,526.0 609.5,515.9 595.2,509.1" fill="#66c8f8" stroke="#000" stroke-width="0.9" stroke-linejoin="round"/>
<polygon points="554.2,519.3 574.7,529.3 576.0,515.8 562.1,509.1" fill="#3e7eaa" stroke="#000" stroke-width="0.9" stroke-linejoin="round"/><polygon points="574.7,529.3 595.9,510.4 587.1,506.0 576.0,515.8" fill="#39739c" stroke="#000" stroke-width="0.9" stroke-linejoin="round"/><polygon points="562.1,509.1 576.0,515.8 587.1,506.0 573.2,499.3" fill="#66c8f8" stroke="#000" stroke-width="0.9" stroke-linejoin="round"/>
<polygon points="532.8,509.5 552.7,519.2 554.2,505.9 540.6,499.3" fill="#3e7eaa" stroke="#000" stroke-width="0.9" stroke-linejoin="round"/><polygon points="552.7,519.2 574.0,500.7 565.3,496.2 554.2,505.9" fill="#39739c" stroke="#000" stroke-width="0.9" stroke-linejoin="round"/><polygon points="540.6,499.3 554.2,505.9 565.3,496.2 551.7,489.8" fill="#66c8f8" stroke="#000" stroke-width="0.9" stroke-linejoin="round"/>
<polygon points="511.9,500.0 531.3,509.4 532.9,496.2 519.6,489.8" fill="#3e7eaa" stroke="#000" stroke-width="0.9" stroke-linejoin="round"/><polygon points="531.3,509.4 552.7,491.3 544.1,486.8 532.9,496.2" fill="#39739c" stroke="#000" stroke-width="0.9" stroke-linejoin="round"/><polygon points="519.6,489.8 532.9,496.2 544.1,486.8 530.8,480.5" fill="#66c8f8" stroke="#000" stroke-width="0.9" stroke-linejoin="round"/>
<polygon points="491.6,490.6 510.5,499.9 512.1,486.8 499.2,480.5" fill="#3e7eaa" stroke="#000" stroke-width="0.9" stroke-linejoin="round"/><polygon points="510.5,499.9 531.9,482.1 523.3,477.6 512.1,486.8" fill="#39739c" stroke="#000" stroke-width="0.9" stroke-linejoin="round"/><polygon points="499.2,480.5 512.1,486.8 523.3,477.6 510.4,471.4" fill="#66c8f8" stroke="#000" stroke-width="0.9" stroke-linejoin="round"/>
<polygon points="471.7,481.5 490.1,490.6 491.9,477.6 479.3,471.5" fill="#3e7eaa" stroke="#000" stroke-width="0.9" stroke-linejoin="round"/><polygon points="490.1,490.6 511.6,473.2 503.1,468.6 491.9,477.6" fill="#39739c" stroke="#000" stroke-width="0.9" stroke-linejoin="round"/><polygon points="479.3,471.5 491.9,477.6 503.1,468.6 490.5,462.6" fill="#66c8f8" stroke="#000" stroke-width="0.9" stroke-linejoin="round"/>
<polygon points="452.3,472.7 470.3,481.5 472.1,468.6 459.8,462.7" fill="#3e7eaa" stroke="#000" stroke-width="0.9" stroke-linejoin="round"/><polygon points="470.3,481.5 491.9,464.5 483.4,459.8 472.1,468.6" fill="#39739c" stroke="#000" stroke-width="0.9" stroke-linejoin="round"/><polygon points="459.8,462.7 472.1,468.6 483.4,459.8 471.1,453.9" fill="#66c8f8" stroke="#000" stroke-width="0.9" stroke-linejoin="round"/>
<polygon points="433.4,464.0 450.9,472.6 452.9,459.9 440.9,454.1" fill="#3e7eaa" stroke="#000" stroke-width="0.9" stroke-linejoin="round"/><polygon points="450.9,472.6 472.5,455.9 464.2,451.2 452.9,459.9" fill="#39739c" stroke="#000" stroke-width="0.9" stroke-linejoin="round"/><polygon points="440.9,454.1 452.9,459.9 464.2,451.2 452.2,445.5" fill="#66c8f8" stroke="#000" stroke-width="0.9" stroke-linejoin="round"/>
<polygon points="414.9,455.6 432.0,464.0 434.0,451.4 422.3,445.7" fill="#3e7eaa" stroke="#000" stroke-width="0.9" stroke-linejoin="round"/><polygon points="432.0,464.0 453.7,447.6 445.4,442.8 434.0,451.4" fill="#39739c" stroke="#000" stroke-width="0.9" stroke-linejoin="round"/><polygon points="422.3,445.7 434.0,451.4 445.4,442.8 433.7,437.2" fill="#66c8f8" stroke="#000" stroke-width="0.9" stroke-linejoin="round"/>
<polygon points="396.9,447.3 413.6,455.5 415.7,443.0 404.2,437.4" fill="#3e7eaa" stroke="#000" stroke-width="0.9" stroke-linejoin="round"/><polygon points="413.6,455.5 435.3,439.5 427.0,434.6 415.7,443.0" fill="#39739c" stroke="#000" stroke-width="0.9" stroke-linejoin="round"/><polygon points="404.2,437.4 415.7,443.0 427.0,434.6 415.6,429.2" fill="#66c8f8" stroke="#000" stroke-width="0.9" stroke-linejoin="round"/>
<polygon points="379.3,439.2 395.6,447.3 397.7,434.9 386.5,429.4" fill="#3e7eaa" stroke="#000" stroke-width="0.9" stroke-linejoin="round"/><polygon points="395.6,447.3 417.3,431.5 409.1,426.7 397.7,434.9" fill="#39739c" stroke="#000" stroke-width="0.9" stroke-linejoin="round"/><polygon points="386.5,429.4 397.7,434.9 409.1,426.7 397.9,421.3" fill="#66c8f8" stroke="#000" stroke-width="0.9" stroke-linejoin="round"/>
<polygon points="362.0,431.3 378.0,439.2 380.2,426.9 369.3,421.6" fill="#3e7eaa" stroke="#000" stroke-width="0.9" stroke-linejoin="round"/><polygon points="378.0,439.2 399.7,423.8 391.5,418.9 380.2,426.9" fill="#39739c" stroke="#000" stroke-width="0.9" stroke-linejoin="round"/><polygon points="369.3,421.6 380.2,426.9 391.5,418.9 380.6,413.6" fill="#66c8f8" stroke="#000" stroke-width="0.9" stroke-linejoin="round"/>
<polygon points="345.2,423.6 360.8,431.3 363.0,419.1 352.4,413.9" fill="#3e7eaa" stroke="#000" stroke-width="0.9" stroke-linejoin="round"/><polygon points="360.8,431.3 382.5,416.2 374.4,411.2 363.0,419.1" fill="#39739c" stroke="#000" stroke-width="0.9" stroke-linejoin="round"/><polygon points="352.4,413.9 363.0,419.1 374.4,411.2 363.8,406.1" fill="#66c8f8" stroke="#000" stroke-width="0.9" stroke-linejoin="round"/>
<polygon points="713.7,624.2 739.1,637.0 739.5,622.0 722.2,613.3" fill="#3e7eaa" stroke="#000" stroke-width="0.9" stroke-linejoin="round"/><polygon points="739.1,637.0 759.8,613.6 750.4,609.8 739.5,622.0" fill="#39739c" stroke="#000" stroke-width="0.9" stroke-linejoin="round"/><polygon points="722.2,613.3 739.5,622.0 750.4,609.8 733.1,601.3" fill="#66c8f8" stroke="#000" stroke-width="0.9" stroke-linejoin="round"/>
<polygon points="687.9,611.5 712.6,623.9 713.2,609.0 696.4,600.6" fill="#3e7eaa" stroke="#000" stroke-width="0.9" stroke-linejoin="round"/><polygon points="712.6,623.9 733.5,601.1 724.1,597.2 713.2,609.0" fill="#39739c" stroke="#000" stroke-width="0.9" stroke-linejoin="round"/><polygon points="696.4,600.6 713.2,609.0 724.1,597.2 707.4,589.0" fill="#66c8f8" stroke="#000" stroke-width="0.9" stroke-linejoin="round"/>
<polygon points="662.9,599.1 686.9,611.1 687.6,596.5 671.3,588.3" fill="#3e7eaa" stroke="#000" stroke-width="0.9" stroke-linejoin="round"/><polygon points="686.9,611.1 707.9,588.9 698.7,584.9 687.6,596.5" fill="#39739c" stroke="#000" stroke-width="0.9" stroke-linejoin="round"/><polygon points="671.3,588.3 687.6,596.5 698.7,584.9 682.4,576.9" fill="#66c8f8" stroke="#000" stroke-width="0.9" stroke-linejoin="round"/>
<polygon points="638.6,587.0 661.9,598.7 662.8,584.3 646.9,576.3" fill="#3e7eaa" stroke="#000" stroke-width="0.9" stroke-linejoin="round"/><polygon points="661.9,598.7 683.1,577.0 673.9,573.0 662.8,584.3" fill="#39739c" stroke="#000" stroke-width="0.9" stroke-linejoin="round"/><polygon points="646.9,576.3 662.8,584.3 673.9,573.0 658.0,565.2" fill="#66c8f8" stroke="#000" stroke-width="0.9" stroke-linejoin="round"/>
<polygon points="567.5,552.4 588.9,563.2 590.2,549.3 575.6,542.0" fill="#3e7eaa" stroke="#000" stroke-width="0.9" stroke-linejoin="round"/><polygon points="588.9,563.2 610.6,543.0 601.6,538.7 590.2,549.3" fill="#39739c" stroke="#000" stroke-width="0.9" stroke-linejoin="round"/><polygon points="575.6,542.0 590.2,549.3 601.6,538.7 587.0,531.6" fill="#66c8f8" stroke="#000" stroke-width="0.9" stroke-linejoin="round"/>
<polygon points="545.5,542.1 566.4,552.6 567.8,538.8 553.6,531.7" fill="#3e7eaa" stroke="#000" stroke-width="0.9" stroke-linejoin="round"/><polygon points="566.4,552.6 588.1,532.8 579.2,528.5 567.8,538.8" fill="#39739c" stroke="#000" stroke-width="0.9" stroke-linejoin="round"/><polygon points="553.6,531.7 567.8,538.8 579.2,528.5 565.0,521.5" fill="#66c8f8" stroke="#000" stroke-width="0.9" stroke-linejoin="round"/>
<polygon points="524.1,532.0 544.4,542.2 545.9,528.6 532.1,521.7" fill="#3e7eaa" stroke="#000" stroke-width="0.9" stroke-linejoin="round"/><polygon points="544.4,542.2 566.3,522.9 557.4,518.5 545.9,528.6" fill="#39739c" stroke="#000" stroke-width="0.9" stroke-linejoin="round"/><polygon points="532.1,521.7 545.9,528.6 557.4,518.5 543.5,511.7" fill="#66c8f8" stroke="#000" stroke-width="0.9" stroke-linejoin="round"/>
<polygon points="503.2,522.2 523.0,532.1 524.6,518.7 511.1,511.9" fill="#3e7eaa" stroke="#000" stroke-width="0.9" stroke-linejoin="round"/><polygon points="523.0,532.1 544.9,513.2 536.1,508.8 524.6,518.7" fill="#39739c" stroke="#000" stroke-width="0.9" stroke-linejoin="round"/><polygon points="511.1,511.9 524.6,518.7 536.1,508.8 522.6,502.2" fill="#66c8f8" stroke="#000" stroke-width="0.9" stroke-linejoin="round"/>
<polygon points="482.8,512.6 502.1,522.3 503.8,509.0 490.7,502.4" fill="#3e7eaa" stroke="#000" stroke-width="0.9" stroke-linejoin="round"/><polygon points="502.1,522.3 524.1,503.8 515.4,499.3 503.8,509.0" fill="#39739c" stroke="#000" stroke-width="0.9" stroke-linejoin="round"/><polygon points="490.7,502.4 503.8,509.0 515.4,499.3 502.2,492.9" fill="#66c8f8" stroke="#000" stroke-width="0.9" stroke-linejoin="round"/>
<polygon points="463.0,503.2 481.7,512.7 483.6,499.5 470.8,493.1" fill="#3e7eaa" stroke="#000" stroke-width="0.9" stroke-linejoin="round"/><polygon points="481.7,512.7 503.9,494.6 495.2,490.1 483.6,499.5" fill="#39739c" stroke="#000" stroke-width="0.9" stroke-linejoin="round"/><polygon points="470.8,493.1 483.6,499.5 495.2,490.1 482.3,483.8" fill="#66c8f8" stroke="#000" stroke-width="0.9" stroke-linejoin="round"/>
<polygon points="443.6,494.1 461.9,503.4 463.8,490.3 451.3,484.0" fill="#3e7eaa" stroke="#000" stroke-width="0.9" stroke-linejoin="round"/><polygon points="461.9,503.4 484.1,485.6 475.4,481.0 463.8,490.3" fill="#39739c" stroke="#000" stroke-width="0.9" stroke-linejoin="round"/><polygon points="451.3,484.0 463.8,490.3 475.4,481.0 462.9,474.9" fill="#66c8f8" stroke="#000" stroke-width="0.9" stroke-linejoin="round"/>
<polygon points="424.7,485.2 442.5,494.3 444.5,481.3 432.3,475.2" fill="#3e7eaa" stroke="#000" stroke-width="0.9" stroke-linejoin="round"/><polygon points="442.5,494.3 464.7,476.9 456.2,472.2 444.5,481.3" fill="#39739c" stroke="#000" stroke-width="0.9" stroke-linejoin="round"/><polygon points="432.3,475.2 444.5,481.3 456.2,472.2 444.0,466.2" fill="#66c8f8" stroke="#000" stroke-width="0.9" stroke-linejoin="round"/>
<polygon points="578.1,580.2 612.1,597.8 615.2,581.5 588.3,567.7" fill="#3e7eaa" stroke="#000" stroke-width="0.9" stroke-linejoin="round"/><polygon points="612.1,597.8 656.3,554.6 645.6,551.9 615.2,581.5" fill="#39739c" stroke="#000" stroke-width="0.9" stroke-linejoin="round"/><polygon points="588.3,567.7 615.2,581.5 645.6,551.9 618.9,538.9" fill="#66c8f8" stroke="#000" stroke-width="0.9" stroke-linejoin="round"/>
<polygon points="406.2,476.5 423.6,485.4 425.7,472.5 413.8,466.5" fill="#3e7eaa" stroke="#000" stroke-width="0.9" stroke-linejoin="round"/><polygon points="423.6,485.4 445.9,468.3 437.3,463.6 425.7,472.5" fill="#39739c" stroke="#000" stroke-width="0.9" stroke-linejoin="round"/><polygon points="413.8,466.5 425.7,472.5 437.3,463.6 425.4,457.7" fill="#66c8f8" stroke="#000" stroke-width="0.9" stroke-linejoin="round"/>
<polygon points="388.1,468.0 405.1,476.7 407.3,463.9 395.7,458.1" fill="#3e7eaa" stroke="#000" stroke-width="0.9" stroke-linejoin="round"/><polygon points="405.1,476.7 427.4,459.9 419.0,455.2 407.3,463.9" fill="#39739c" stroke="#000" stroke-width="0.9" stroke-linejoin="round"/><polygon points="395.7,458.1 407.3,463.9 419.0,455.2 407.3,449.5" fill="#66c8f8" stroke="#000" stroke-width="0.9" stroke-linejoin="round"/>
<polygon points="370.5,459.7 387.1,468.2 389.3,455.6 378.0,449.8" fill="#3e7eaa" stroke="#000" stroke-width="0.9" stroke-linejoin="round"/><polygon points="387.1,468.2 409.4,451.8 401.0,447.0 389.3,455.6" fill="#39739c" stroke="#000" stroke-width="0.9" stroke-linejoin="round"/><polygon points="378.0,449.8 389.3,455.6 401.0,447.0 389.7,441.4" fill="#66c8f8" stroke="#000" stroke-width="0.9" stroke-linejoin="round"/>
<polygon points="353.3,451.6 369.5,459.9 371.8,447.4 360.7,441.8" fill="#3e7eaa" stroke="#000" stroke-width="0.9" stroke-linejoin="round"/><polygon points="369.5,459.9 391.8,443.8 383.5,439.0 371.8,447.4" fill="#39739c" stroke="#000" stroke-width="0.9" stroke-linejoin="round"/><polygon points="360.7,441.8 371.8,447.4 383.5,439.0 372.4,433.5" fill="#66c8f8" stroke="#000" stroke-width="0.9" stroke-linejoin="round"/>
<polygon points="325.6,438.3 351.3,451.3 353.6,438.9 332.9,428.4" fill="#3e7eaa" stroke="#000" stroke-width="0.9" stroke-linejoin="round"/><polygon points="351.3,451.3 373.6,435.5 365.3,430.7 353.6,438.9" fill="#39739c" stroke="#000" stroke-width="0.9" stroke-linejoin="round"/><polygon points="332.9,428.4 353.6,438.9 365.3,430.7 344.6,420.4" fill="#66c8f8" stroke="#000" stroke-width="0.9" stroke-linejoin="round"/>
<polygon points="619.2,606.1 642.6,618.3 643.6,603.6 627.7,595.4" fill="#3e7eaa" stroke="#000" stroke-width="0.9" stroke-linejoin="round"/><polygon points="642.6,618.3 664.5,595.9 655.1,591.9 643.6,603.6" fill="#39739c" stroke="#000" stroke-width="0.9" stroke-linejoin="round"/><polygon points="627.7,595.4 643.6,603.6 655.1,591.9 639.2,583.9" fill="#66c8f8" stroke="#000" stroke-width="0.9" stroke-linejoin="round"/>
<polygon points="643.5,618.9 667.5,631.4 668.5,616.5 652.0,608.1" fill="#3e7eaa" stroke="#000" stroke-width="0.9" stroke-linejoin="round"/><polygon points="667.5,631.4 689.3,608.4 679.9,604.6 668.5,616.5" fill="#39739c" stroke="#000" stroke-width="0.9" stroke-linejoin="round"/><polygon points="652.0,608.1 668.5,616.5 679.9,604.6 663.5,596.3" fill="#66c8f8" stroke="#000" stroke-width="0.9" stroke-linejoin="round"/>
<polygon points="668.5,632.0 693.3,644.9 694.0,629.8 677.1,621.1" fill="#3e7eaa" stroke="#000" stroke-width="0.9" stroke-linejoin="round"/><polygon points="693.3,644.9 714.9,621.4 705.4,617.5 694.0,629.8" fill="#39739c" stroke="#000" stroke-width="0.9" stroke-linejoin="round"/><polygon points="677.1,621.1 694.0,629.8 705.4,617.5 688.5,609.0" fill="#66c8f8" stroke="#000" stroke-width="0.9" stroke-linejoin="round"/>
<polygon points="694.2,645.6 719.8,658.9 720.4,643.6 702.9,634.6" fill="#3e7eaa" stroke="#000" stroke-width="0.9" stroke-linejoin="round"/><polygon points="719.8,658.9 741.2,634.7 731.6,630.9 720.4,643.6" fill="#39739c" stroke="#000" stroke-width="0.9" stroke-linejoin="round"/><polygon points="702.9,634.6 720.4,643.6 731.6,630.9 714.2,622.1" fill="#66c8f8" stroke="#000" stroke-width="0.9" stroke-linejoin="round"/>
<polygon points="550.6,572.6 572.1,583.8 573.6,569.6 558.9,562.0" fill="#3e7eaa" stroke="#000" stroke-width="0.9" stroke-linejoin="round"/><polygon points="572.1,583.8 594.5,562.9 585.3,558.7 573.6,569.6" fill="#39739c" stroke="#000" stroke-width="0.9" stroke-linejoin="round"/><polygon points="558.9,562.0 573.6,569.6 585.3,558.7 570.6,551.3" fill="#66c8f8" stroke="#000" stroke-width="0.9" stroke-linejoin="round"/>
<polygon points="528.6,561.6 549.6,572.6 551.1,558.6 536.8,551.1" fill="#3e7eaa" stroke="#000" stroke-width="0.9" stroke-linejoin="round"/><polygon points="549.6,572.6 572.0,552.1 562.9,547.9 551.1,558.6" fill="#39739c" stroke="#000" stroke-width="0.9" stroke-linejoin="round"/><polygon points="536.8,551.1 551.1,558.6 562.9,547.9 548.6,540.6" fill="#66c8f8" stroke="#000" stroke-width="0.9" stroke-linejoin="round"/>
<polygon points="507.2,551.0 527.6,561.6 529.3,547.8 515.3,540.5" fill="#3e7eaa" stroke="#000" stroke-width="0.9" stroke-linejoin="round"/><polygon points="527.6,561.6 550.1,541.6 541.1,537.3 529.3,547.8" fill="#39739c" stroke="#000" stroke-width="0.9" stroke-linejoin="round"/><polygon points="515.3,540.5 529.3,547.8 541.1,537.3 527.1,530.3" fill="#66c8f8" stroke="#000" stroke-width="0.9" stroke-linejoin="round"/>
<polygon points="486.3,540.6 506.2,551.0 508.0,537.3 494.4,530.2" fill="#3e7eaa" stroke="#000" stroke-width="0.9" stroke-linejoin="round"/><polygon points="506.2,551.0 528.8,531.4 519.8,527.1 508.0,537.3" fill="#39739c" stroke="#000" stroke-width="0.9" stroke-linejoin="round"/><polygon points="494.4,530.2 508.0,537.3 519.8,527.1 506.2,520.2" fill="#66c8f8" stroke="#000" stroke-width="0.9" stroke-linejoin="round"/>
<polygon points="466.0,530.5 485.3,540.6 487.2,527.0 474.0,520.2" fill="#3e7eaa" stroke="#000" stroke-width="0.9" stroke-linejoin="round"/><polygon points="485.3,540.6 508.0,521.5 499.1,517.1 487.2,527.0" fill="#39739c" stroke="#000" stroke-width="0.9" stroke-linejoin="round"/><polygon points="474.0,520.2 487.2,527.0 499.1,517.1 485.9,510.4" fill="#66c8f8" stroke="#000" stroke-width="0.9" stroke-linejoin="round"/>
<polygon points="446.1,520.6 465.0,530.5 467.0,517.1 454.1,510.4" fill="#3e7eaa" stroke="#000" stroke-width="0.9" stroke-linejoin="round"/><polygon points="465.0,530.5 487.8,511.8 478.9,507.3 467.0,517.1" fill="#39739c" stroke="#000" stroke-width="0.9" stroke-linejoin="round"/><polygon points="454.1,510.4 467.0,517.1 478.9,507.3 466.0,500.8" fill="#66c8f8" stroke="#000" stroke-width="0.9" stroke-linejoin="round"/>
<polygon points="426.8,511.0 445.2,520.7 447.3,507.4 434.7,500.8" fill="#3e7eaa" stroke="#000" stroke-width="0.9" stroke-linejoin="round"/><polygon points="445.2,520.7 468.0,502.3 459.2,497.8 447.3,507.4" fill="#39739c" stroke="#000" stroke-width="0.9" stroke-linejoin="round"/><polygon points="434.7,500.8 447.3,507.4 459.2,497.8 446.6,491.4" fill="#66c8f8" stroke="#000" stroke-width="0.9" stroke-linejoin="round"/>
<polygon points="407.9,501.6 425.9,511.0 428.0,497.9 415.8,491.5" fill="#3e7eaa" stroke="#000" stroke-width="0.9" stroke-linejoin="round"/><polygon points="425.9,511.0 448.7,493.1 440.0,488.5 428.0,497.9" fill="#39739c" stroke="#000" stroke-width="0.9" stroke-linejoin="round"/><polygon points="415.8,491.5 428.0,497.9 440.0,488.5 427.7,482.3" fill="#66c8f8" stroke="#000" stroke-width="0.9" stroke-linejoin="round"/>
<polygon points="389.5,492.5 407.0,501.7 409.3,488.6 397.3,482.4" fill="#3e7eaa" stroke="#000" stroke-width="0.9" stroke-linejoin="round"/><polygon points="407.0,501.7 429.9,484.1 421.2,479.5 409.3,488.6" fill="#39739c" stroke="#000" stroke-width="0.9" stroke-linejoin="round"/><polygon points="397.3,482.4 409.3,488.6 421.2,479.5 409.3,473.4" fill="#66c8f8" stroke="#000" stroke-width="0.9" stroke-linejoin="round"/>
<polygon points="371.6,483.6 388.6,492.5 390.9,479.6 379.3,473.5" fill="#3e7eaa" stroke="#000" stroke-width="0.9" stroke-linejoin="round"/><polygon points="388.6,492.5 411.5,475.3 402.9,470.6 390.9,479.6" fill="#39739c" stroke="#000" stroke-width="0.9" stroke-linejoin="round"/><polygon points="379.3,473.5 390.9,479.6 402.9,470.6 391.3,464.7" fill="#66c8f8" stroke="#000" stroke-width="0.9" stroke-linejoin="round"/>
<polygon points="354.0,474.8 370.7,483.6 373.1,470.8 361.7,464.9" fill="#3e7eaa" stroke="#000" stroke-width="0.9" stroke-linejoin="round"/><polygon points="370.7,483.6 393.6,466.7 385.1,462.0 373.1,470.8" fill="#39739c" stroke="#000" stroke-width="0.9" stroke-linejoin="round"/><polygon points="361.7,464.9 373.1,470.8 385.1,462.0 373.7,456.2" fill="#66c8f8" stroke="#000" stroke-width="0.9" stroke-linejoin="round"/>
<polygon points="336.9,466.3 353.2,474.9 355.6,462.2 344.5,456.4" fill="#3e7eaa" stroke="#000" stroke-width="0.9" stroke-linejoin="round"/><polygon points="353.2,474.9 376.1,458.3 367.6,453.6 355.6,462.2" fill="#39739c" stroke="#000" stroke-width="0.9" stroke-linejoin="round"/><polygon points="344.5,456.4 355.6,462.2 367.6,453.6 356.5,447.9" fill="#66c8f8" stroke="#000" stroke-width="0.9" stroke-linejoin="round"/>
<polygon points="320.2,458.0 336.1,466.4 338.6,453.8 327.7,448.1" fill="#3e7eaa" stroke="#000" stroke-width="0.9" stroke-linejoin="round"/><polygon points="336.1,466.4 359.0,450.1 350.6,445.3 338.6,453.8" fill="#39739c" stroke="#000" stroke-width="0.9" stroke-linejoin="round"/><polygon points="327.7,448.1 338.6,453.8 350.6,445.3 339.7,439.8" fill="#66c8f8" stroke="#000" stroke-width="0.9" stroke-linejoin="round"/>
<polygon points="303.8,449.9 319.4,458.1 321.9,445.6 311.3,440.1" fill="#3e7eaa" stroke="#000" stroke-width="0.9" stroke-linejoin="round"/><polygon points="319.4,458.1 342.3,442.1 333.9,437.3 321.9,445.6" fill="#39739c" stroke="#000" stroke-width="0.9" stroke-linejoin="round"/><polygon points="311.3,440.1 321.9,445.6 333.9,437.3 323.3,431.9" fill="#66c8f8" stroke="#000" stroke-width="0.9" stroke-linejoin="round"/>
<polygon points="598.7,625.3 622.1,637.9 623.4,623.0 607.3,614.4" fill="#3e7eaa" stroke="#000" stroke-width="0.9" stroke-linejoin="round"/><polygon points="622.1,637.9 644.8,614.8 635.2,610.9 623.4,623.0" fill="#39739c" stroke="#000" stroke-width="0.9" stroke-linejoin="round"/><polygon points="607.3,614.4 623.4,623.0 635.2,610.9 619.3,602.5" fill="#66c8f8" stroke="#000" stroke-width="0.9" stroke-linejoin="round"/>
<polygon points="622.6,638.6 646.7,651.6 647.8,636.4 631.3,627.6" fill="#3e7eaa" stroke="#000" stroke-width="0.9" stroke-linejoin="round"/><polygon points="646.7,651.6 669.3,627.9 659.6,624.1 647.8,636.4" fill="#39739c" stroke="#000" stroke-width="0.9" stroke-linejoin="round"/><polygon points="631.3,627.6 647.8,636.4 659.6,624.1 643.2,615.5" fill="#66c8f8" stroke="#000" stroke-width="0.9" stroke-linejoin="round"/>
<polygon points="647.2,652.3 672.1,665.7 673.0,650.3 656.0,641.3" fill="#3e7eaa" stroke="#000" stroke-width="0.9" stroke-linejoin="round"/><polygon points="672.1,665.7 694.5,641.3 684.8,637.6 673.0,650.3" fill="#39739c" stroke="#000" stroke-width="0.9" stroke-linejoin="round"/><polygon points="656.0,641.3 673.0,650.3 684.8,637.6 667.8,628.8" fill="#66c8f8" stroke="#000" stroke-width="0.9" stroke-linejoin="round"/>
<polygon points="520.0,583.9 541.3,595.4 542.9,581.1 528.4,573.3" fill="#3e7eaa" stroke="#000" stroke-width="0.9" stroke-linejoin="round"/><polygon points="541.3,595.4 564.3,574.1 555.0,570.0 542.9,581.1" fill="#39739c" stroke="#000" stroke-width="0.9" stroke-linejoin="round"/><polygon points="528.4,573.3 542.9,581.1 555.0,570.0 540.5,562.4" fill="#66c8f8" stroke="#000" stroke-width="0.9" stroke-linejoin="round"/>
<polygon points="497.8,573.1 518.6,584.3 520.4,570.2 506.2,562.6" fill="#3e7eaa" stroke="#000" stroke-width="0.9" stroke-linejoin="round"/><polygon points="518.6,584.3 541.8,563.5 532.5,559.3 520.4,570.2" fill="#39739c" stroke="#000" stroke-width="0.9" stroke-linejoin="round"/><polygon points="506.2,562.6 520.4,570.2 532.5,559.3 518.4,551.9" fill="#66c8f8" stroke="#000" stroke-width="0.9" stroke-linejoin="round"/>
<polygon points="476.3,562.6 496.5,573.5 498.4,559.5 484.6,552.1" fill="#3e7eaa" stroke="#000" stroke-width="0.9" stroke-linejoin="round"/><polygon points="496.5,573.5 519.8,553.1 510.6,548.9 498.4,559.5" fill="#39739c" stroke="#000" stroke-width="0.9" stroke-linejoin="round"/><polygon points="484.6,552.1 498.4,559.5 510.6,548.9 496.8,541.6" fill="#66c8f8" stroke="#000" stroke-width="0.9" stroke-linejoin="round"/>
<polygon points="542.9,599.5 588.7,624.3 589.9,609.4 551.2,588.7" fill="#3e7eaa" stroke="#000" stroke-width="0.9" stroke-linejoin="round"/><polygon points="588.7,624.3 611.7,601.7 602.0,597.7 589.9,609.4" fill="#39739c" stroke="#000" stroke-width="0.9" stroke-linejoin="round"/><polygon points="551.2,588.7 589.9,609.4 602.0,597.7 563.3,577.4" fill="#66c8f8" stroke="#000" stroke-width="0.9" stroke-linejoin="round"/>
<polygon points="455.3,552.3 475.0,562.9 477.0,549.1 463.5,541.9" fill="#3e7eaa" stroke="#000" stroke-width="0.9" stroke-linejoin="round"/><polygon points="475.0,562.9 498.3,543.0 489.2,538.7 477.0,549.1" fill="#39739c" stroke="#000" stroke-width="0.9" stroke-linejoin="round"/><polygon points="463.5,541.9 477.0,549.1 489.2,538.7 475.8,531.7" fill="#66c8f8" stroke="#000" stroke-width="0.9" stroke-linejoin="round"/>
<polygon points="434.9,542.3 454.0,552.7 456.1,539.0 443.0,531.9" fill="#3e7eaa" stroke="#000" stroke-width="0.9" stroke-linejoin="round"/><polygon points="454.0,552.7 477.4,533.2 468.4,528.8 456.1,539.0" fill="#39739c" stroke="#000" stroke-width="0.9" stroke-linejoin="round"/><polygon points="443.0,531.9 456.1,539.0 468.4,528.8 455.3,521.9" fill="#66c8f8" stroke="#000" stroke-width="0.9" stroke-linejoin="round"/>
<polygon points="414.9,532.5 433.5,542.7 435.7,529.1 423.0,522.2" fill="#3e7eaa" stroke="#000" stroke-width="0.9" stroke-linejoin="round"/><polygon points="433.5,542.7 457.0,523.5 448.0,519.1 435.7,529.1" fill="#39739c" stroke="#000" stroke-width="0.9" stroke-linejoin="round"/><polygon points="423.0,522.2 435.7,529.1 448.0,519.1 435.3,512.4" fill="#66c8f8" stroke="#000" stroke-width="0.9" stroke-linejoin="round"/>
<polygon points="395.4,523.0 413.6,532.9 415.9,519.5 403.5,512.8" fill="#3e7eaa" stroke="#000" stroke-width="0.9" stroke-linejoin="round"/><polygon points="413.6,532.9 437.1,514.2 428.2,509.7 415.9,519.5" fill="#39739c" stroke="#000" stroke-width="0.9" stroke-linejoin="round"/><polygon points="403.5,512.8 415.9,519.5 428.2,509.7 415.8,503.2" fill="#66c8f8" stroke="#000" stroke-width="0.9" stroke-linejoin="round"/>
<polygon points="376.4,513.7 394.1,523.4 396.5,510.1 384.4,503.5" fill="#3e7eaa" stroke="#000" stroke-width="0.9" stroke-linejoin="round"/><polygon points="394.1,523.4 417.7,505.0 408.9,500.5 396.5,510.1" fill="#39739c" stroke="#000" stroke-width="0.9" stroke-linejoin="round"/><polygon points="384.4,503.5 396.5,510.1 408.9,500.5 396.7,494.1" fill="#66c8f8" stroke="#000" stroke-width="0.9" stroke-linejoin="round"/>
<polygon points="357.9,504.6 375.2,514.1 377.6,500.9 365.8,494.5" fill="#3e7eaa" stroke="#000" stroke-width="0.9" stroke-linejoin="round"/><polygon points="375.2,514.1 398.8,496.1 390.0,491.5 377.6,500.9" fill="#39739c" stroke="#000" stroke-width="0.9" stroke-linejoin="round"/><polygon points="365.8,494.5 377.6,500.9 390.0,491.5 378.1,485.3" fill="#66c8f8" stroke="#000" stroke-width="0.9" stroke-linejoin="round"/>
<polygon points="285.2,465.5 322.6,486.0 325.1,473.1 292.6,455.5" fill="#3e7eaa" stroke="#000" stroke-width="0.9" stroke-linejoin="round"/><polygon points="322.6,486.0 346.2,469.1 337.4,464.3 325.1,473.1" fill="#39739c" stroke="#000" stroke-width="0.9" stroke-linejoin="round"/><polygon points="292.6,455.5 325.1,473.1 337.4,464.3 304.9,447.1" fill="#66c8f8" stroke="#000" stroke-width="0.9" stroke-linejoin="round"/>
<polygon points="339.8,495.8 356.6,505.0 359.2,492.0 347.6,485.7" fill="#3e7eaa" stroke="#000" stroke-width="0.9" stroke-linejoin="round"/><polygon points="356.6,505.0 380.3,487.4 371.5,482.8 359.2,492.0" fill="#39739c" stroke="#000" stroke-width="0.9" stroke-linejoin="round"/><polygon points="347.6,485.7 359.2,492.0 371.5,482.8 360.0,476.7" fill="#66c8f8" stroke="#000" stroke-width="0.9" stroke-linejoin="round"/>
<polygon points="322.1,487.1 338.6,496.1 341.1,483.2 329.9,477.1" fill="#3e7eaa" stroke="#000" stroke-width="0.9" stroke-linejoin="round"/><polygon points="338.6,496.1 362.2,478.9 353.5,474.2 341.1,483.2" fill="#39739c" stroke="#000" stroke-width="0.9" stroke-linejoin="round"/><polygon points="329.9,477.1 341.1,483.2 353.5,474.2 342.3,468.2" fill="#66c8f8" stroke="#000" stroke-width="0.9" stroke-linejoin="round"/>
<polygon points="652.0,691.4 677.9,705.9 680.9,687.6 663.2,677.8" fill="#3e7eaa" stroke="#000" stroke-width="0.9" stroke-linejoin="round"/><polygon points="677.9,705.9 724.0,653.7 712.7,651.9 680.9,687.6" fill="#39739c" stroke="#000" stroke-width="0.9" stroke-linejoin="round"/><polygon points="663.2,677.8 680.9,687.6 712.7,651.9 695.2,642.7" fill="#66c8f8" stroke="#000" stroke-width="0.9" stroke-linejoin="round"/>
<polygon points="576.9,645.5 600.5,658.7 601.9,643.4 585.8,634.5" fill="#3e7eaa" stroke="#000" stroke-width="0.9" stroke-linejoin="round"/><polygon points="600.5,658.7 624.0,634.7 614.2,631.0 601.9,643.4" fill="#39739c" stroke="#000" stroke-width="0.9" stroke-linejoin="round"/><polygon points="585.8,634.5 601.9,643.4 614.2,631.0 598.1,622.3" fill="#66c8f8" stroke="#000" stroke-width="0.9" stroke-linejoin="round"/>
<polygon points="601.4,659.9 625.7,673.5 626.9,658.1 610.3,648.9" fill="#3e7eaa" stroke="#000" stroke-width="0.9" stroke-linejoin="round"/><polygon points="625.7,673.5 649.0,648.9 639.1,645.3 626.9,658.1" fill="#39739c" stroke="#000" stroke-width="0.9" stroke-linejoin="round"/><polygon points="610.3,648.9 626.9,658.1 639.1,645.3 622.6,636.3" fill="#66c8f8" stroke="#000" stroke-width="0.9" stroke-linejoin="round"/>
<polygon points="626.6,674.9 651.7,688.9 652.8,673.2 635.7,663.7" fill="#3e7eaa" stroke="#000" stroke-width="0.9" stroke-linejoin="round"/><polygon points="651.7,688.9 674.9,663.6 664.9,660.0 652.8,673.2" fill="#39739c" stroke="#000" stroke-width="0.9" stroke-linejoin="round"/><polygon points="635.7,663.7 652.8,673.2 664.9,660.0 647.9,650.7" fill="#66c8f8" stroke="#000" stroke-width="0.9" stroke-linejoin="round"/>
<polygon points="340.2,517.7 481.7,597.1 480.6,581.1 345.2,505.8" fill="#3e7eaa" stroke="#000" stroke-width="0.9" stroke-linejoin="round"/><polygon points="481.7,597.1 505.7,575.8 493.2,570.0 480.6,581.1" fill="#39739c" stroke="#000" stroke-width="0.9" stroke-linejoin="round"/><polygon points="345.2,505.8 480.6,581.1 493.2,570.0 357.8,496.3" fill="#66c8f8" stroke="#000" stroke-width="0.9" stroke-linejoin="round"/>
<polygon points="499.7,608.2 521.2,620.3 523.1,605.6 508.4,597.5" fill="#3e7eaa" stroke="#000" stroke-width="0.9" stroke-linejoin="round"/><polygon points="521.2,620.3 545.2,598.0 535.6,594.1 523.1,605.6" fill="#39739c" stroke="#000" stroke-width="0.9" stroke-linejoin="round"/><polygon points="508.4,597.5 523.1,605.6 535.6,594.1 520.9,586.1" fill="#66c8f8" stroke="#000" stroke-width="0.9" stroke-linejoin="round"/>
<polygon points="467.5,590.2 499.2,608.1 501.1,593.6 476.0,579.6" fill="#3e7eaa" stroke="#000" stroke-width="0.9" stroke-linejoin="round"/><polygon points="499.2,608.1 523.2,586.4 513.6,582.3 501.1,593.6" fill="#39739c" stroke="#000" stroke-width="0.9" stroke-linejoin="round"/><polygon points="476.0,579.6 501.1,593.6 513.6,582.3 488.6,568.6" fill="#66c8f8" stroke="#000" stroke-width="0.9" stroke-linejoin="round"/>
<polygon points="319.1,510.7 345.0,525.4 347.6,512.1 327.1,500.6" fill="#3e7eaa" stroke="#000" stroke-width="0.9" stroke-linejoin="round"/><polygon points="345.0,525.4 369.3,507.1 360.3,502.5 347.6,512.1" fill="#39739c" stroke="#000" stroke-width="0.9" stroke-linejoin="round"/><polygon points="327.1,500.6 347.6,512.1 360.3,502.5 339.8,491.3" fill="#66c8f8" stroke="#000" stroke-width="0.9" stroke-linejoin="round"/>
<polygon points="301.9,501.1 318.3,510.4 321.1,497.3 309.8,491.0" fill="#3e7eaa" stroke="#000" stroke-width="0.9" stroke-linejoin="round"/><polygon points="318.3,510.4 342.6,492.7 333.8,488.1 321.1,497.3" fill="#39739c" stroke="#000" stroke-width="0.9" stroke-linejoin="round"/><polygon points="309.8,491.0 321.1,497.3 333.8,488.1 322.5,481.9" fill="#66c8f8" stroke="#000" stroke-width="0.9" stroke-linejoin="round"/>
</g>
<polygon points="16,9 32,9 24,22" fill="#1e9fd6"/><polygon points="16,9 32,9 24,12" fill="#b8e4f4"/><polygon points="24,12 32,9 24,22" fill="#0f6e98"/>
<text x="37" y="20" font-size="11.5" fill="#000">mz-2521_002</text>
<path d="M1168 15.5H1178" stroke="#111" stroke-width="1"/>
<rect x="1213.5" y="10.5" width="9" height="9" fill="none" stroke="#111" stroke-width="1"/>
<path d="M1259 10L1269 20M1269 10L1259 20" stroke="#111" stroke-width="1"/>
<defs><linearGradient id="lg1" x1="0" y1="0" x2="1" y2="1"><stop offset="0" stop-color="#c9dbe2"/><stop offset="1" stop-color="#9dbccb"/></linearGradient></defs>
<rect x="16" y="39" width="43" height="43" rx="7" fill="url(#lg1)"/>
<polygon points="41,52 59,62 59,75 52,82 42,82 37,76" fill="#6b9bb0" opacity="0.8"/>
<polygon points="21,49 53,49 37,76" fill="#13a0d8"/><polygon points="21,49 53,49 37,56" fill="#c0e8f6"/><polygon points="37,56 53,49 37,76" fill="#0d6f97"/>
<text x="72" y="59" font-size="14.5" fill="#707070" letter-spacing="-0.3">AUTODESK<tspan font-size="7" dy="-6">®</tspan></text>
<text x="72" y="74.5" font-size="14.5" font-weight="bold" fill="#5e5e5e">123D<tspan font-size="7" dy="-6">®</tspan><tspan dy="6"> DESIGN</tspan></text>
<path d="M206 62.5L212.7 68L219.5 62.5" stroke="#333" stroke-width="2.4" fill="none"/>
<path d="M303 58L310 53V63Z" fill="#111"/><path d="M309 58H317Q322 58 323 63" stroke="#111" stroke-width="2.6" fill="none"/>
<path d="M366 58L359 53V63Z" fill="#b3b3b3"/><path d="M360 58H352Q347 58 346 63" stroke="#b3b3b3" stroke-width="2.6" fill="none"/>
<rect x="398.0" y="47" width="1" height="26" fill="#9a9a9a"/>
<rect x="484.0" y="47" width="1" height="26" fill="#9a9a9a"/>
<rect x="957.0" y="47" width="1" height="26" fill="#9a9a9a"/>
<polygon points="463,79 463,83 459,83" fill="#a8a8a8"/>
<polygon points="549.5,79 549.5,83 545.5,83" fill="#a8a8a8"/>
<polygon points="592.5,79 592.5,83 588.5,83" fill="#a8a8a8"/>
<polygon points="635,79 635,83 631,83" fill="#a8a8a8"/>
<polygon points="678.5,79 678.5,83 674.5,83" fill="#a8a8a8"/>
<polygon points="721,79 721,83 717,83" fill="#a8a8a8"/>
<polygon points="765,79 765,83 761,83" fill="#a8a8a8"/>
<polygon points="807.5,79 807.5,83 803.5,83" fill="#a8a8a8"/>
<rect x="432.5" y="49" width="20.5" height="20.5" fill="none" stroke="#222" stroke-width="1" stroke-dasharray="1.2,1.2"/>
<path d="M449.5 46V55M445 50.5H454" stroke="#222" stroke-width="1.2"/><path d="M449.5 45.5l-2 2h4zM449.5 55.5l-2-2h4zM444.5 50.5l2-2v4zM454.5 50.5l-2-2v4z" fill="#222"/>
<polygon points="434.5,57.8 440.5,61.0 440.5,67.5 434.5,64.2" fill="#6a6a6a"/><polygon points="440.5,61.0 446.5,57.8 446.5,64.2 440.5,67.5" fill="#2c2c2c"/><polygon points="440.5,54.5 446.5,57.8 440.5,61.0 434.5,57.8" fill="#fff" stroke="#222" stroke-width="1" stroke-linejoin="round"/><polygon points="440.5,54.5 446.5,57.8 446.5,64.2 440.5,67.5 434.5,64.2 434.5,57.8" fill="none" stroke="#222" stroke-width="1" stroke-linejoin="round"/>
<circle cx="533.5" cy="53.8" r="6.5" fill="#fff" stroke="#222" stroke-width="1.3"/>
<polygon points="517.0,56.5 525.0,61.0 525.0,70.0 517.0,65.5" fill="#6a6a6a"/><polygon points="525.0,61.0 533.0,56.5 533.0,65.5 525.0,70.0" fill="#2c2c2c"/><polygon points="525.0,52.0 533.0,56.5 525.0,61.0 517.0,56.5" fill="#fff" stroke="#222" stroke-width="1" stroke-linejoin="round"/><polygon points="525.0,52.0 533.0,56.5 533.0,65.5 525.0,70.0 517.0,65.5 517.0,56.5" fill="none" stroke="#222" stroke-width="1" stroke-linejoin="round"/>
<path d="M568 51Q558 52 561 62Q564 67 568 66" stroke="#333" stroke-width="1.2" fill="none"/><circle cx="568" cy="51" r="2" fill="#222"/><circle cx="563" cy="63" r="2" fill="#222"/>
<polygon points="581,48 584,51 573,64 569,66 570,61" fill="#2a2a2a"/><polygon points="570,61 573,64 569,66" fill="#fff" stroke="#222" stroke-width="0.6"/>
<polygon points="606.0,56.5 614.0,61.0 614.0,70.0 606.0,65.5" fill="#6a6a6a"/><polygon points="614.0,61.0 622.0,56.5 622.0,65.5 614.0,70.0" fill="#2c2c2c"/><polygon points="614.0,52.0 622.0,56.5 614.0,61.0 606.0,56.5" fill="#fff" stroke="#222" stroke-width="1" stroke-linejoin="round"/><polygon points="614.0,52.0 622.0,56.5 622.0,65.5 614.0,70.0 606.0,65.5 606.0,56.5" fill="none" stroke="#222" stroke-width="1" stroke-linejoin="round"/>
<path d="M615 56L622 46" stroke="#222" stroke-width="2.4"/>
<polygon points="646.0,56.5 654.0,61.0 654.0,70.0 646.0,65.5" fill="#6a6a6a"/><polygon points="654.0,61.0 662.0,56.5 662.0,65.5 654.0,70.0" fill="#2c2c2c"/><polygon points="654.0,52.0 662.0,56.5 654.0,61.0 646.0,56.5" fill="#fff" stroke="#222" stroke-width="1" stroke-linejoin="round"/><polygon points="654.0,52.0 662.0,56.5 662.0,65.5 654.0,70.0 646.0,65.5 646.0,56.5" fill="none" stroke="#222" stroke-width="1" stroke-linejoin="round"/>
<path d="M662.5 46.5V55.5H671" stroke="#222" stroke-width="1.2" fill="none"/><path d="M662.5 46l-2.5 3h5zM671.5 55.5l-3-2.5v5z" fill="#222"/>
<polygon points="690.0,51.9 694.2,54.2 694.2,59.0 690.0,56.6" fill="#6a6a6a"/><polygon points="694.2,54.2 698.5,51.9 698.5,56.6 694.2,59.0" fill="#2c2c2c"/><polygon points="694.2,49.5 698.5,51.9 694.2,54.2 690.0,51.9" fill="#fff" stroke="#222" stroke-width="1" stroke-linejoin="round"/><polygon points="694.2,49.5 698.5,51.9 698.5,56.6 694.2,59.0 690.0,56.6 690.0,51.9" fill="none" stroke="#222" stroke-width="1" stroke-linejoin="round"/>
<polygon points="700.5,51.9 704.8,54.2 704.8,59.0 700.5,56.6" fill="#6a6a6a"/><polygon points="704.8,54.2 709.0,51.9 709.0,56.6 704.8,59.0" fill="#2c2c2c"/><polygon points="704.8,49.5 709.0,51.9 704.8,54.2 700.5,51.9" fill="#fff" stroke="#222" stroke-width="1" stroke-linejoin="round"/><polygon points="704.8,49.5 709.0,51.9 709.0,56.6 704.8,59.0 700.5,56.6 700.5,51.9" fill="none" stroke="#222" stroke-width="1" stroke-linejoin="round"/>
<polygon points="690.0,61.4 694.2,63.8 694.2,68.5 690.0,66.1" fill="#6a6a6a"/><polygon points="694.2,63.8 698.5,61.4 698.5,66.1 694.2,68.5" fill="#2c2c2c"/><polygon points="694.2,59.0 698.5,61.4 694.2,63.8 690.0,61.4" fill="#fff" stroke="#222" stroke-width="1" stroke-linejoin="round"/><polygon points="694.2,59.0 698.5,61.4 698.5,66.1 694.2,68.5 690.0,66.1 690.0,61.4" fill="none" stroke="#222" stroke-width="1" stroke-linejoin="round"/>
<polygon points="700.5,61.4 704.8,63.8 704.8,68.5 700.5,66.1" fill="#6a6a6a"/><polygon points="704.8,63.8 709.0,61.4 709.0,66.1 704.8,68.5" fill="#2c2c2c"/><polygon points="704.8,59.0 709.0,61.4 704.8,63.8 700.5,61.4" fill="#fff" stroke="#222" stroke-width="1" stroke-linejoin="round"/><polygon points="704.8,59.0 709.0,61.4 709.0,66.1 704.8,68.5 700.5,66.1 700.5,61.4" fill="none" stroke="#222" stroke-width="1" stroke-linejoin="round"/>
<circle cx="747.5" cy="56" r="5" fill="#fff" stroke="#222" stroke-width="1.1"/>
<polygon points="735.0,58.1 740.5,61.2 740.5,67.5 735.0,64.4" fill="#6a6a6a"/><polygon points="740.5,61.2 746.0,58.1 746.0,64.4 740.5,67.5" fill="#2c2c2c"/><polygon points="740.5,55.0 746.0,58.1 740.5,61.2 735.0,58.1" fill="#fff" stroke="#222" stroke-width="1" stroke-linejoin="round"/><polygon points="740.5,55.0 746.0,58.1 746.0,64.4 740.5,67.5 735.0,64.4 735.0,58.1" fill="none" stroke="#222" stroke-width="1" stroke-linejoin="round"/>
<rect x="732" y="48" width="2" height="2" fill="#222"/>
<rect x="753" y="48" width="2" height="2" fill="#222"/>
<rect x="732" y="69" width="2" height="2" fill="#222"/>
<rect x="753" y="69" width="2" height="2" fill="#222"/>
<polygon points="777.0,56.5 783.8,61.0 783.8,70.0 777.0,65.5" fill="#6a6a6a"/><polygon points="783.8,61.0 790.5,56.5 790.5,65.5 783.8,70.0" fill="#2c2c2c"/><polygon points="783.8,52.0 790.5,56.5 783.8,61.0 777.0,56.5" fill="#fff" stroke="#222" stroke-width="1" stroke-linejoin="round"/><polygon points="783.8,52.0 790.5,56.5 790.5,65.5 783.8,70.0 777.0,65.5 777.0,56.5" fill="none" stroke="#222" stroke-width="1" stroke-linejoin="round"/>
<polygon points="785,50 792,50.5 798,54 798,64 790,69 790,55" fill="#2c2c2c" stroke="#222" stroke-width="0.8"/><polygon points="785,50 792,50.5 798,54 790,55" fill="#fff" stroke="#222" stroke-width="0.8"/>
<polygon points="818.5,53.5 826.5,59.0 826.5,70.0 818.5,64.5" fill="#6a6a6a"/><polygon points="826.5,59.0 834.5,53.5 834.5,64.5 826.5,70.0" fill="#2c2c2c"/><polygon points="826.5,48.0 834.5,53.5 826.5,59.0 818.5,53.5" fill="#fff" stroke="#222" stroke-width="1" stroke-linejoin="round"/><polygon points="826.5,48.0 834.5,53.5 834.5,64.5 826.5,70.0 818.5,64.5 818.5,53.5" fill="none" stroke="#222" stroke-width="1" stroke-linejoin="round"/>
<rect x="833.5" y="49" width="6.5" height="20.5" fill="#fff" stroke="#222" stroke-width="1.1"/><path d="M836 52H840M837 55H840M836 58H840M837 61H840M836 64H840M837 67H840" stroke="#222" stroke-width="0.7"/>
<path d="M862.5 51H881V55.5H874.5V70H868.5V55.5H862.5Z" fill="#222"/>
<path d="M910 61L917 54Q920 51 922.5 54Q925 57 922 60L915 67" stroke="#2a2a2a" stroke-width="4" fill="none"/><path d="M910 61L917 54Q920 51 922.5 54Q925 57 922 60L915 67" stroke="#fff" stroke-width="1.6" fill="none"/>
<path d="M906 59L910 63" stroke="#222" stroke-width="3.5"/><path d="M913 66L917 70" stroke="#222" stroke-width="3.5"/>
<polygon points="991,58.0 1001,53.0 1012,58.0 1001,63.0" fill="#fff" stroke="#222" stroke-width="1"/>
<polygon points="991,60.4 1001,55.4 1012,60.4 1001,65.4" fill="#fff" stroke="#222" stroke-width="1"/>
<polygon points="991,62.8 1001,57.8 1012,62.8 1001,67.8" fill="#fff" stroke="#222" stroke-width="1"/>
<polygon points="991,65.2 1001,60.2 1012,65.2 1001,70.2" fill="#fff" stroke="#222" stroke-width="1"/>
<polygon points="991,67.6 1001,62.599999999999994 1012,67.6 1001,72.6" fill="#fff" stroke="#222" stroke-width="1"/>
<polygon points="991,54 1001,49 1012,54 1001,59" fill="#fff" stroke="#222" stroke-width="1"/>
<rect x="1021" y="44" width="136" height="35" rx="2" fill="#0a9dd0"/>
<text x="1089" y="59" font-size="12" font-weight="bold" fill="#fff" text-anchor="middle">プレミアム版登録</text>
<text x="1088" y="74" font-size="10" fill="#e8f6fc" text-anchor="middle">(商業利用向け)</text>
<rect x="1163" y="44" width="79" height="35" rx="2" fill="#0a9dd0"/>
<text x="1201" y="66" font-size="12.5" font-weight="bold" fill="#fff" text-anchor="middle">サインイン</text>
<defs><linearGradient id="qg" x1="0" y1="0" x2="0" y2="1"><stop offset="0" stop-color="#fafafa"/><stop offset="1" stop-color="#d6d6d6"/></linearGradient></defs>
<rect x="1248.5" y="44.5" width="33" height="33" fill="url(#qg)" stroke="#b0b0b0"/>
<text x="1265" y="68" font-size="19" fill="#333" text-anchor="middle">?</text>
<defs><filter id="blur4" x="-50%" y="-50%" width="200%" height="200%"><feGaussianBlur stdDeviation="5"/></filter><linearGradient id="vcl" x1="0" y1="0" x2="0.3" y2="1"><stop offset="0" stop-color="#ffffff"/><stop offset="1" stop-color="#bdbdbd"/></linearGradient><linearGradient id="vcr" x1="0" y1="0" x2="-0.2" y2="1"><stop offset="0" stop-color="#fbfbfb"/><stop offset="1" stop-color="#c4c4c4"/></linearGradient></defs>
<ellipse cx="1226" cy="180" rx="34" ry="12" fill="#000" opacity="0.12" filter="url(#blur4)"/>
<polygon points="1222.1,110.4 1259.6,121.0 1228.6,139.3 1189.5,124.3" fill="#f4f4f4" stroke="#b8b8b8" stroke-width="0.8" stroke-linejoin="round" stroke-dasharray="3,2"/>
<polygon points="1189.5,124.3 1228.6,139.3 1228.6,184.2 1192.2,165.4" fill="url(#vcl)" stroke="#b8b8b8" stroke-width="0.8" stroke-linejoin="round" stroke-dasharray="3,2"/>
<polygon points="1228.6,139.3 1259.6,121.0 1256.0,165.4 1228.6,184.2" fill="url(#vcr)" stroke="#b8b8b8" stroke-width="0.8" stroke-linejoin="round" stroke-dasharray="3,2"/>
<polygon points="1221.5,135.5 1228.5,131.5 1235.0,135.5 1235.0,144.0 1228.6,148.0 1221.5,144.0" fill="#a9dcf0"/>
<text x="0" y="0" font-size="20" fill="#222" text-anchor="middle" transform="matrix(-0.95,-0.1,0.45,-0.62,1228,118)">上</text>
<text x="0" y="0" font-size="19" fill="#222" text-anchor="middle" transform="matrix(0.95,0.3,0,1,1209,162)">左</text>
<text x="0" y="0" font-size="18" fill="#222" text-anchor="middle" transform="matrix(0.85,-0.35,0,1,1243,162)">前</text>
<rect x="1220" y="210" width="36" height="388" fill="#f0f0f0" stroke="#c4c4c4" stroke-width="2"/>
<path d="M1223.5 322.5H1252.5M1223.5 506.5H1252.5" stroke="#bdbdbd" stroke-width="1"/>
<path d="M1238.5 222V241M1228 231.5H1249" stroke="#222" stroke-width="1.3"/><path d="M1238.5 221l-3 4h6zM1238.5 242l-3-4h6zM1227.5 231.5l4-3v6zM1249.5 231.5l-4-3v6z" fill="#222"/>
<polygon points="1232.0,262.0 1238.0,265.5 1238.0,272.5 1232.0,269.0" fill="#6a6a6a"/><polygon points="1238.0,265.5 1244.0,262.0 1244.0,269.0 1238.0,272.5" fill="#2c2c2c"/><polygon points="1238.0,258.5 1244.0,262.0 1238.0,265.5 1232.0,262.0" fill="#fff" stroke="#222" stroke-width="1" stroke-linejoin="round"/><polygon points="1238.0,258.5 1244.0,262.0 1244.0,269.0 1238.0,272.5 1232.0,269.0 1232.0,262.0" fill="none" stroke="#222" stroke-width="1" stroke-linejoin="round"/>
<path d="M1232 258Q1240 252 1246.5 260M1244 273Q1236 279 1229.5 271" stroke="#222" stroke-width="1.2" fill="none"/><path d="M1240 254l5-1-1 5zM1236 277l-5 1 1-5z" fill="#222"/>
<circle cx="1236.5" cy="298.5" r="6.5" fill="#fff" stroke="#222" stroke-width="1.6"/><path d="M1241 303.5L1246.5 309" stroke="#222" stroke-width="3"/>
<path d="M1228 339V335H1232M1244 335H1248V339M1248 350V354H1244M1232 354H1228V350" stroke="#222" stroke-width="1.2" fill="none"/>
<polygon points="1232.5,340.8 1238.0,344.0 1238.0,350.5 1232.5,347.2" fill="#6a6a6a"/><polygon points="1238.0,344.0 1243.5,340.8 1243.5,347.2 1238.0,350.5" fill="#2c2c2c"/><polygon points="1238.0,337.5 1243.5,340.8 1238.0,344.0 1232.5,340.8" fill="#fff" stroke="#222" stroke-width="1" stroke-linejoin="round"/><polygon points="1238.0,337.5 1243.5,340.8 1243.5,347.2 1238.0,350.5 1232.5,347.2 1232.5,340.8" fill="none" stroke="#222" stroke-width="1" stroke-linejoin="round"/>
<circle cx="1243" cy="376" r="5.5" fill="#fff" stroke="#222" stroke-width="1.1"/>
<polygon points="1227.5,376.5 1234.5,381.0 1234.5,390.0 1227.5,385.5" fill="#555"/><polygon points="1234.5,381.0 1241.5,376.5 1241.5,385.5 1234.5,390.0" fill="#2a2a2a"/><polygon points="1234.5,372.0 1241.5,376.5 1234.5,381.0 1227.5,376.5" fill="#e8e8e8" stroke="#222" stroke-width="1" stroke-linejoin="round"/><polygon points="1234.5,372.0 1241.5,376.5 1241.5,385.5 1234.5,390.0 1227.5,385.5 1227.5,376.5" fill="none" stroke="#222" stroke-width="1" stroke-linejoin="round"/>
<path d="M1228 415Q1238 404 1248 415Q1238 426 1228 415Z" fill="#fff" stroke="#222" stroke-width="1.3"/><circle cx="1238" cy="415" r="3.6" fill="#444"/>
<path d="M1228 449L1247 447L1249 457L1231 459Z" fill="#fff" stroke="#222" stroke-width="1"/><path d="M1232.5 448.5L1235 458.5M1238 448L1240 458M1243 447.5L1245 457.5M1229.5 452.5L1248 450.5M1230.5 455.5L1248.5 454" stroke="#222" stroke-width="0.9"/>
<path d="M1235 446Q1242 438 1249 446Q1242 453 1235 446Z" fill="#fff" stroke="#222" stroke-width="1.1"/><circle cx="1242" cy="446" r="2.5" fill="#444"/>
<path d="M1228 480H1233L1235 476.5H1241L1243 480H1248.5V494H1228Z" fill="#333"/><circle cx="1238.2" cy="486.8" r="4.6" fill="#fff"/><circle cx="1238.2" cy="486.8" r="3" fill="#333"/><rect x="1244" y="481.5" width="2" height="2" fill="#fff"/>
<polygon points="1228.0,526.5 1237.0,531.0 1237.0,540.0 1228.0,535.5" fill="#444"/><polygon points="1237.0,531.0 1246.0,526.5 1246.0,535.5 1237.0,540.0" fill="#2b2b2b"/><polygon points="1237.0,522.0 1246.0,526.5 1237.0,531.0 1228.0,526.5" fill="#fff" stroke="#222" stroke-width="1" stroke-linejoin="round"/><polygon points="1237.0,522.0 1246.0,526.5 1246.0,535.5 1237.0,540.0 1228.0,535.5 1228.0,526.5" fill="none" stroke="#222" stroke-width="1" stroke-linejoin="round"/>
<path d="M1238 524L1244 518Q1247 515.5 1249.5 518Q1251.5 521 1249 523L1243 529" stroke="#2a2a2a" stroke-width="3" fill="none"/>
<rect x="1225.5" y="516.5" width="2" height="2" fill="#222"/>
<rect x="1225.5" y="538.5" width="2" height="2" fill="#222"/>
<rect x="1249" y="538.5" width="2" height="2" fill="#222"/>
<circle cx="1230.5" cy="562" r="3.5" fill="#333"/><path d="M1231 566Q1232 578 1247 578" stroke="#333" stroke-width="1" stroke-dasharray="1.5,1.2" fill="none"/>
<path d="M1234 572L1242 564Q1246 560.5 1249 564Q1251 567 1248 570L1240 578" stroke="#2a2a2a" stroke-width="3.5" fill="none"/>
<path d="M1227 581L1251 559" stroke="#fff" stroke-width="3"/><path d="M1227 581L1251 559" stroke="#222" stroke-width="1.3"/>
<rect x="1108" y="718" width="155" height="22" fill="#c8c8c8"/>
<text x="1185" y="734" font-size="13" font-weight="bold" fill="#111" text-anchor="middle">グリッドを編集</text>
<rect x="1110.0" y="746.5" width="71" height="19" fill="#fff" stroke="#c8c8c8" stroke-width="3"/>
<text x="1145.5" y="761" font-size="13" font-weight="bold" fill="#111" text-anchor="middle">1</text>
<rect x="1190.0" y="746.5" width="71" height="19" fill="#fff" stroke="#c8c8c8" stroke-width="3"/>
<text x="1225.5" y="761" font-size="13" font-weight="bold" fill="#111" text-anchor="middle">1</text>
<text x="1146" y="782" font-size="9.5" font-weight="bold" fill="#111" text-anchor="middle">長さスナップ</text>
<text x="1226" y="782" font-size="9.5" font-weight="bold" fill="#111" text-anchor="middle">角度スナップ</text>
<text x="636" y="806" font-size="12" fill="#222">mz-2521_16.stl</text>
<rect x="617" y="797" width="14" height="9" fill="#fff" stroke="#555" stroke-width="1"/><path d="M618 804l3 2 4-5" stroke="#2a9a3a" stroke-width="2" fill="none"/>
<text x="877" y="806" font-size="12" fill="#666">2020/02/05 1:28</text>
<text x="1020" y="806" font-size="12" fill="#666">3D オブジェクト</text>
<text x="1182" y="806" font-size="12" fill="#666">2 KB</text>
<polygon points="1281,463 1286,458.5 1286,467.5" fill="#fff"/>
</svg>
</body></html>
